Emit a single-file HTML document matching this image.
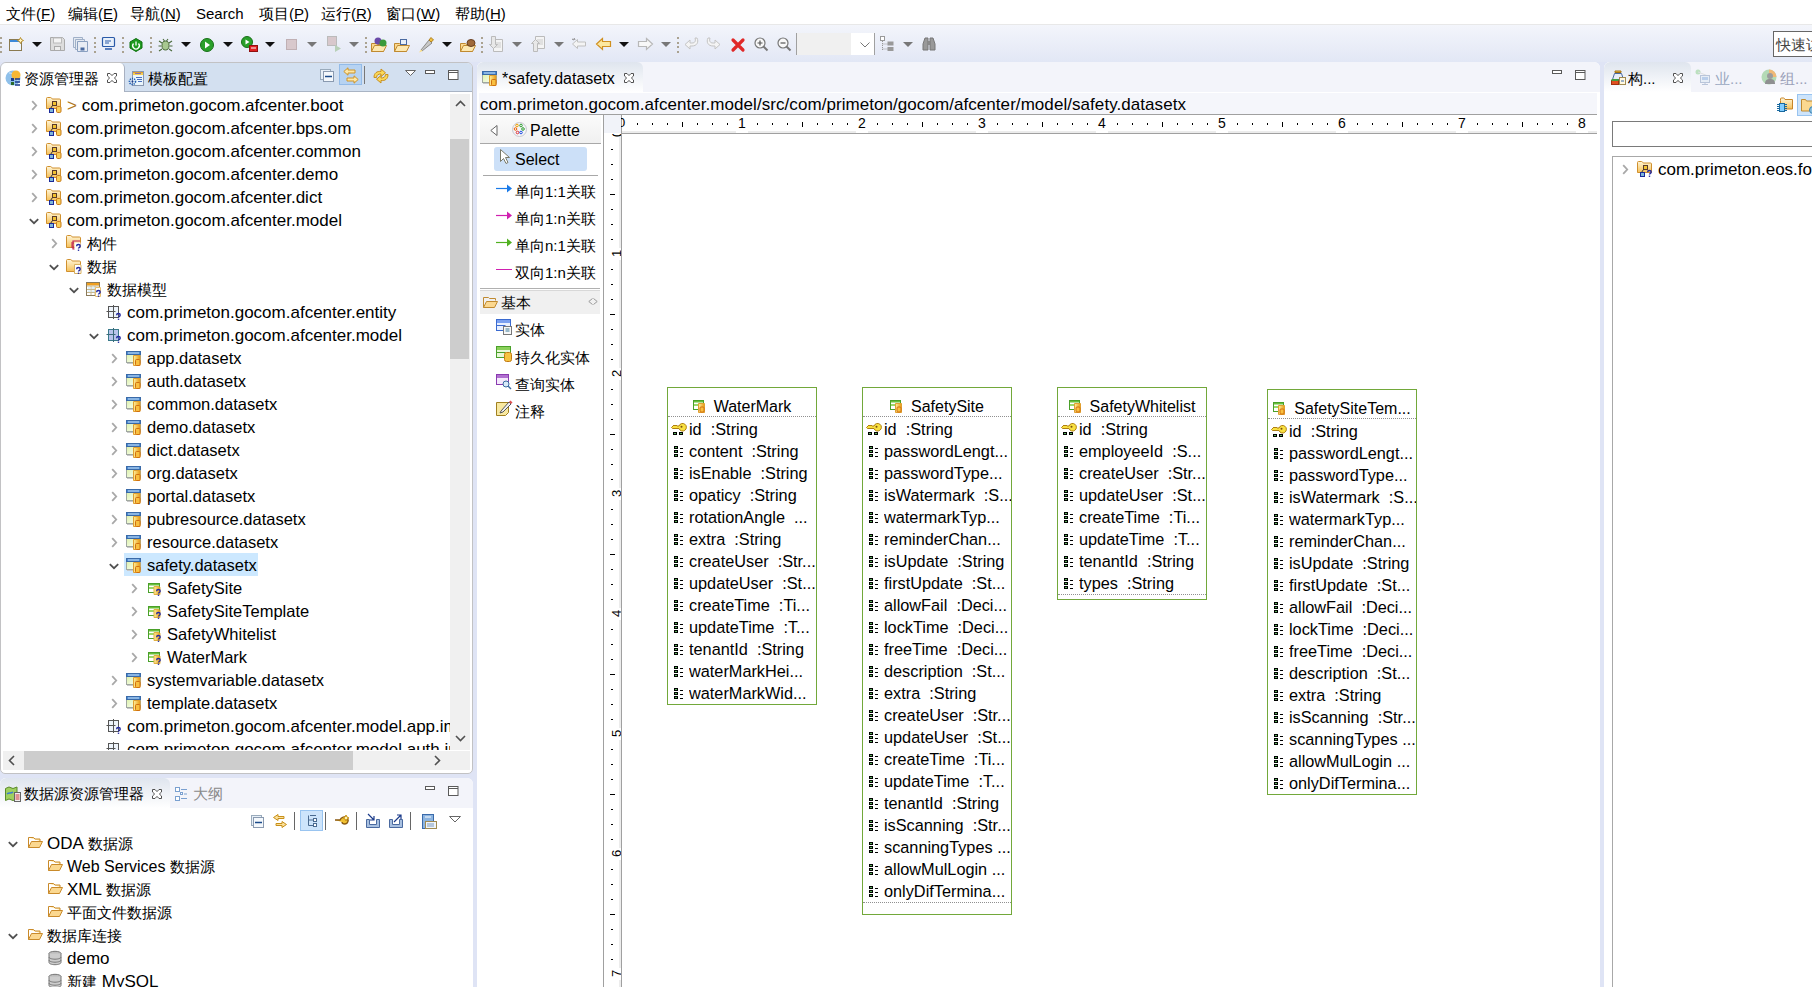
<!DOCTYPE html><html><head><meta charset="utf-8"><style>
*{box-sizing:border-box}
html,body{margin:0;padding:0}
body{width:1812px;height:987px;overflow:hidden;position:relative;background:#dfe4f5;font-family:"Liberation Sans",sans-serif;color:#000}
.a{position:absolute}
.t{position:absolute;white-space:nowrap}
svg.i{position:absolute;overflow:visible}
#menubar{left:0;top:0;width:1812px;height:24px;background:#fff}
#menubar span{position:absolute;top:4px;font-size:15px;line-height:20px}
#toolbar{left:0;top:24px;width:1812px;height:38px;background:linear-gradient(#f3f5fb,#e2e7f5);border-top:1px solid #e8e8e8}
.panel{position:absolute;background:#fff;overflow:hidden}
.hdr{position:absolute;left:0;top:0;right:0;height:30px}
.row{position:absolute;height:23px;line-height:23px;white-space:nowrap;font-size:17px}
.cj{font-size:15px}
</style></head><body>
<svg width="0" height="0" style="position:absolute"><defs><linearGradient id="gF" x1="0" y1="0" x2="0" y2="1"><stop offset="0" stop-color="#fff6d8"/><stop offset="1" stop-color="#f6c15a"/></linearGradient><linearGradient id="gW" x1="0" y1="0" x2="1" y2="1"><stop offset="0" stop-color="#d8f0a0"/><stop offset="1" stop-color="#ffffff"/></linearGradient><linearGradient id="gY" x1="0" y1="0" x2="1" y2="0"><stop offset="0" stop-color="#fff0a0"/><stop offset="1" stop-color="#e89a10"/></linearGradient><linearGradient id="gT" x1="0" y1="0" x2="0" y2="1"><stop offset="0" stop-color="#dfe6ef"/><stop offset="1" stop-color="#ffffff"/></linearGradient></defs></svg>
<div id="menubar" class="a">
<span style="left:6px">文件(<u>F</u>)</span>
<span style="left:68px">编辑(<u>E</u>)</span>
<span style="left:130px">导航(<u>N</u>)</span>
<span style="left:196px">Search</span>
<span style="left:259px">项目(<u>P</u>)</span>
<span style="left:321px">运行(<u>R</u>)</span>
<span style="left:386px">窗口(<u>W</u>)</span>
<span style="left:455px">帮助(<u>H</u>)</span>
</div>
<div id="toolbar" class="a"></div>
<div class="panel" style="left:0;top:62px;width:473px;height:712px;border:1px solid #c2c2c4;border-radius:6px 6px 5px 5px">
<div class="hdr" style="height:29px;background:#d3e0f0;border-bottom:1px solid #a9b4c4"></div>
<div class="a" style="left:0;top:0;width:124px;height:29px;background:#fff;border-right:1px solid #a8b0c0;border-radius:5px 5px 0 0"></div>
</div>
<div class="a" style="left:0;top:93px;width:450px;height:657px;overflow:hidden">
<svg class="i" style="left:31px;top:7px" width="7" height="11" viewBox="0 0 7 11"><path d="M1.2 1.2l4 4.3l-4 4.3" fill="none" stroke="#a8a8a8" stroke-width="1.8"/></svg>
<svg class="i" style="left:46px;top:4px" width="16" height="16" viewBox="0 0 16 16"><path d="M0.5 11.5V1.5q0-1 1-1h3q.8 0 1.2.8l.5.7h7.3q1 0 1 1v8.5z" fill="url(#gF)" stroke="#d0902e"/><rect x="6.5" y="4.5" width="4" height="4" fill="#f2c230" stroke="#5a3a2a"/><path d="M6.5 8.5l-2 3" stroke="#333"/><rect x="3.5" y="11.5" width="4" height="4" fill="#7fb7d8" stroke="#1a2a9a"/><rect x="10.5" y="9.5" width="4.5" height="6" rx="1.2" fill="#f9cf5a" stroke="#c77a1a"/></svg>
<div class="row" style="left:67px;top:1px"><span style="color:#b07820">&gt;</span> com.primeton.gocom.afcenter.boot</div>
<svg class="i" style="left:31px;top:30px" width="7" height="11" viewBox="0 0 7 11"><path d="M1.2 1.2l4 4.3l-4 4.3" fill="none" stroke="#a8a8a8" stroke-width="1.8"/></svg>
<svg class="i" style="left:46px;top:27px" width="16" height="16" viewBox="0 0 16 16"><path d="M0.5 11.5V1.5q0-1 1-1h3q.8 0 1.2.8l.5.7h7.3q1 0 1 1v8.5z" fill="url(#gF)" stroke="#d0902e"/><rect x="6.5" y="4.5" width="4" height="4" fill="#f2c230" stroke="#5a3a2a"/><path d="M6.5 8.5l-2 3" stroke="#333"/><rect x="3.5" y="11.5" width="4" height="4" fill="#7fb7d8" stroke="#1a2a9a"/><rect x="10.5" y="9.5" width="4.5" height="6" rx="1.2" fill="#f9cf5a" stroke="#c77a1a"/></svg>
<div class="row" style="left:67px;top:24px">com.primeton.gocom.afcenter.bps.om</div>
<svg class="i" style="left:31px;top:53px" width="7" height="11" viewBox="0 0 7 11"><path d="M1.2 1.2l4 4.3l-4 4.3" fill="none" stroke="#a8a8a8" stroke-width="1.8"/></svg>
<svg class="i" style="left:46px;top:50px" width="16" height="16" viewBox="0 0 16 16"><path d="M0.5 11.5V1.5q0-1 1-1h3q.8 0 1.2.8l.5.7h7.3q1 0 1 1v8.5z" fill="url(#gF)" stroke="#d0902e"/><rect x="6.5" y="4.5" width="4" height="4" fill="#f2c230" stroke="#5a3a2a"/><path d="M6.5 8.5l-2 3" stroke="#333"/><rect x="3.5" y="11.5" width="4" height="4" fill="#7fb7d8" stroke="#1a2a9a"/><rect x="10.5" y="9.5" width="4.5" height="6" rx="1.2" fill="#f9cf5a" stroke="#c77a1a"/></svg>
<div class="row" style="left:67px;top:47px">com.primeton.gocom.afcenter.common</div>
<svg class="i" style="left:31px;top:76px" width="7" height="11" viewBox="0 0 7 11"><path d="M1.2 1.2l4 4.3l-4 4.3" fill="none" stroke="#a8a8a8" stroke-width="1.8"/></svg>
<svg class="i" style="left:46px;top:73px" width="16" height="16" viewBox="0 0 16 16"><path d="M0.5 11.5V1.5q0-1 1-1h3q.8 0 1.2.8l.5.7h7.3q1 0 1 1v8.5z" fill="url(#gF)" stroke="#d0902e"/><rect x="6.5" y="4.5" width="4" height="4" fill="#f2c230" stroke="#5a3a2a"/><path d="M6.5 8.5l-2 3" stroke="#333"/><rect x="3.5" y="11.5" width="4" height="4" fill="#7fb7d8" stroke="#1a2a9a"/><rect x="10.5" y="9.5" width="4.5" height="6" rx="1.2" fill="#f9cf5a" stroke="#c77a1a"/></svg>
<div class="row" style="left:67px;top:70px">com.primeton.gocom.afcenter.demo</div>
<svg class="i" style="left:31px;top:99px" width="7" height="11" viewBox="0 0 7 11"><path d="M1.2 1.2l4 4.3l-4 4.3" fill="none" stroke="#a8a8a8" stroke-width="1.8"/></svg>
<svg class="i" style="left:46px;top:96px" width="16" height="16" viewBox="0 0 16 16"><path d="M0.5 11.5V1.5q0-1 1-1h3q.8 0 1.2.8l.5.7h7.3q1 0 1 1v8.5z" fill="url(#gF)" stroke="#d0902e"/><rect x="6.5" y="4.5" width="4" height="4" fill="#f2c230" stroke="#5a3a2a"/><path d="M6.5 8.5l-2 3" stroke="#333"/><rect x="3.5" y="11.5" width="4" height="4" fill="#7fb7d8" stroke="#1a2a9a"/><rect x="10.5" y="9.5" width="4.5" height="6" rx="1.2" fill="#f9cf5a" stroke="#c77a1a"/></svg>
<div class="row" style="left:67px;top:93px">com.primeton.gocom.afcenter.dict</div>
<svg class="i" style="left:29px;top:125px" width="10" height="7" viewBox="0 0 10 7"><path d="M0.8 1.2l4.2 4l4.2-4" fill="none" stroke="#505050" stroke-width="1.8"/></svg>
<svg class="i" style="left:46px;top:119px" width="16" height="16" viewBox="0 0 16 16"><path d="M0.5 11.5V1.5q0-1 1-1h3q.8 0 1.2.8l.5.7h7.3q1 0 1 1v8.5z" fill="url(#gF)" stroke="#d0902e"/><rect x="6.5" y="4.5" width="4" height="4" fill="#f2c230" stroke="#5a3a2a"/><path d="M6.5 8.5l-2 3" stroke="#333"/><rect x="3.5" y="11.5" width="4" height="4" fill="#7fb7d8" stroke="#1a2a9a"/><rect x="10.5" y="9.5" width="4.5" height="6" rx="1.2" fill="#f9cf5a" stroke="#c77a1a"/></svg>
<div class="row" style="left:67px;top:116px">com.primeton.gocom.afcenter.model</div>
<svg class="i" style="left:51px;top:145px" width="7" height="11" viewBox="0 0 7 11"><path d="M1.2 1.2l4 4.3l-4 4.3" fill="none" stroke="#a8a8a8" stroke-width="1.8"/></svg>
<svg class="i" style="left:66px;top:142px" width="16" height="16" viewBox="0 0 16 16"><path d="M0.5 12.5V1.5q0-1 1-1h3q.8 0 1.2.8l.5.7h7.3q1 0 1 1v9.5z" fill="url(#gF)" stroke="#d0902e"/><path d="M14 6h-7v8h7M5 8h3M5 12h3M7 10h-2" fill="none" stroke="#c02050" stroke-width="1.2"/><path d="M8.5 7.5h6v8h-6z" fill="#fff"/><path d="M10.6 11.2q0-1.7 1.8-1.7t1.8 1.5q0 1-1 1.5q-.7.4-.7 1" fill="none" stroke="#2328a0" stroke-width="1.4"/><rect x="11.8" y="14.6" width="1.4" height="1.3" fill="#2328a0"/></svg>
<div class="row" style="left:87px;top:139px"><span class="cj">构件</span></div>
<svg class="i" style="left:49px;top:171px" width="10" height="7" viewBox="0 0 10 7"><path d="M0.8 1.2l4.2 4l4.2-4" fill="none" stroke="#505050" stroke-width="1.8"/></svg>
<svg class="i" style="left:66px;top:165px" width="16" height="16" viewBox="0 0 16 16"><path d="M0.5 13.5V2.5q0-1 1-1h3q.8 0 1.2.8l.5.7h7.3q1 0 1 1v9.5z" fill="url(#gF)" stroke="#d0902e"/><path d="M8.5 6.5h5.5l1 1v8h-6.5z" fill="#fff" stroke="#d8b060"/><path d="M10.6 11.2q0-1.7 1.8-1.7t1.8 1.5q0 1-1 1.5q-.7.4-.7 1" fill="none" stroke="#2328a0" stroke-width="1.4"/><rect x="11.8" y="14.6" width="1.4" height="1.3" fill="#2328a0"/></svg>
<div class="row" style="left:87px;top:162px"><span class="cj">数据</span></div>
<svg class="i" style="left:69px;top:194px" width="10" height="7" viewBox="0 0 10 7"><path d="M0.8 1.2l4.2 4l4.2-4" fill="none" stroke="#505050" stroke-width="1.8"/></svg>
<svg class="i" style="left:86px;top:188px" width="16" height="16" viewBox="0 0 16 16"><rect x="0.5" y="1.5" width="13" height="13" fill="#fff" stroke="#8a7a5a"/><rect x="1" y="2" width="12" height="2.5" fill="#f0a020"/><path d="M1 5h12M1 8.5h12M1 11.5h12M5 5v9M9 5v9" stroke="#c8b890"/><rect x="2" y="6" width="2.5" height="2" fill="#d8f0ff"/><rect x="6" y="6" width="2.5" height="2" fill="#d8f0ff"/><rect x="2" y="9.5" width="2.5" height="1.5" fill="#d8f0ff"/><rect x="6" y="9.5" width="2.5" height="1.5" fill="#d8f0ff"/><path d="M9.5 6.5h5v9h-5z" fill="#fff" stroke="#e8c070"/><path d="M10.6 11.2q0-1.7 1.8-1.7t1.8 1.5q0 1-1 1.5q-.7.4-.7 1" fill="none" stroke="#2328a0" stroke-width="1.4"/><rect x="11.8" y="14.6" width="1.4" height="1.3" fill="#2328a0"/></svg>
<div class="row" style="left:107px;top:185px"><span class="cj">数据模型</span></div>
<svg class="i" style="left:106px;top:211px" width="16" height="16" viewBox="0 0 16 16"><rect x="2.5" y="2.5" width="10" height="11" fill="#eef4fb" stroke="#555"/><path d="M7.5 1v14M0.5 7.5h9" stroke="#555"/><path d="M10.6 11.2q0-1.7 1.8-1.7t1.8 1.5q0 1-1 1.5q-.7.4-.7 1" fill="none" stroke="#2328a0" stroke-width="1.4"/><rect x="11.8" y="14.6" width="1.4" height="1.3" fill="#2328a0"/></svg>
<div class="row" style="left:127px;top:208px">com.primeton.gocom.afcenter.entity</div>
<svg class="i" style="left:89px;top:240px" width="10" height="7" viewBox="0 0 10 7"><path d="M0.8 1.2l4.2 4l4.2-4" fill="none" stroke="#505050" stroke-width="1.8"/></svg>
<svg class="i" style="left:106px;top:234px" width="16" height="16" viewBox="0 0 16 16"><rect x="2.5" y="2.5" width="10" height="11" fill="#b8c4ec" stroke="#3a7a8a"/><path d="M7.5 1v14M0.5 7.5h9" stroke="#3a6a7a"/><path d="M10.6 11.2q0-1.7 1.8-1.7t1.8 1.5q0 1-1 1.5q-.7.4-.7 1" fill="none" stroke="#2328a0" stroke-width="1.4"/><rect x="11.8" y="14.6" width="1.4" height="1.3" fill="#2328a0"/></svg>
<div class="row" style="left:127px;top:231px">com.primeton.gocom.afcenter.model</div>
<svg class="i" style="left:111px;top:260px" width="7" height="11" viewBox="0 0 7 11"><path d="M1.2 1.2l4 4.3l-4 4.3" fill="none" stroke="#a8a8a8" stroke-width="1.8"/></svg>
<svg class="i" style="left:126px;top:257px" width="16" height="16" viewBox="0 0 16 16"><rect x="1" y="2" width="14" height="12" fill="#c8c8c8"/><rect x="0.5" y="1.5" width="14" height="11" fill="url(#gW)" stroke="#a0a8a0"/><rect x="0.5" y="1.5" width="14" height="3" fill="#4a8ad0" stroke="#3a6aa8"/><path d="M2 3h11" stroke="#c8e0f8"/><path d="M7.5 5.5h6.5v10h-6.5z" fill="url(#gY)" stroke="#e0a030"/><rect x="9.5" y="9.5" width="4.5" height="6" rx="1" fill="#f8c040" stroke="#d07010"/></svg>
<div class="row" style="left:147px;top:254px;font-size:16.5px">app.datasetx</div>
<svg class="i" style="left:111px;top:283px" width="7" height="11" viewBox="0 0 7 11"><path d="M1.2 1.2l4 4.3l-4 4.3" fill="none" stroke="#a8a8a8" stroke-width="1.8"/></svg>
<svg class="i" style="left:126px;top:280px" width="16" height="16" viewBox="0 0 16 16"><rect x="1" y="2" width="14" height="12" fill="#c8c8c8"/><rect x="0.5" y="1.5" width="14" height="11" fill="url(#gW)" stroke="#a0a8a0"/><rect x="0.5" y="1.5" width="14" height="3" fill="#4a8ad0" stroke="#3a6aa8"/><path d="M2 3h11" stroke="#c8e0f8"/><path d="M7.5 5.5h6.5v10h-6.5z" fill="url(#gY)" stroke="#e0a030"/><rect x="9.5" y="9.5" width="4.5" height="6" rx="1" fill="#f8c040" stroke="#d07010"/></svg>
<div class="row" style="left:147px;top:277px;font-size:16.5px">auth.datasetx</div>
<svg class="i" style="left:111px;top:306px" width="7" height="11" viewBox="0 0 7 11"><path d="M1.2 1.2l4 4.3l-4 4.3" fill="none" stroke="#a8a8a8" stroke-width="1.8"/></svg>
<svg class="i" style="left:126px;top:303px" width="16" height="16" viewBox="0 0 16 16"><rect x="1" y="2" width="14" height="12" fill="#c8c8c8"/><rect x="0.5" y="1.5" width="14" height="11" fill="url(#gW)" stroke="#a0a8a0"/><rect x="0.5" y="1.5" width="14" height="3" fill="#4a8ad0" stroke="#3a6aa8"/><path d="M2 3h11" stroke="#c8e0f8"/><path d="M7.5 5.5h6.5v10h-6.5z" fill="url(#gY)" stroke="#e0a030"/><rect x="9.5" y="9.5" width="4.5" height="6" rx="1" fill="#f8c040" stroke="#d07010"/></svg>
<div class="row" style="left:147px;top:300px;font-size:16.5px">common.datasetx</div>
<svg class="i" style="left:111px;top:329px" width="7" height="11" viewBox="0 0 7 11"><path d="M1.2 1.2l4 4.3l-4 4.3" fill="none" stroke="#a8a8a8" stroke-width="1.8"/></svg>
<svg class="i" style="left:126px;top:326px" width="16" height="16" viewBox="0 0 16 16"><rect x="1" y="2" width="14" height="12" fill="#c8c8c8"/><rect x="0.5" y="1.5" width="14" height="11" fill="url(#gW)" stroke="#a0a8a0"/><rect x="0.5" y="1.5" width="14" height="3" fill="#4a8ad0" stroke="#3a6aa8"/><path d="M2 3h11" stroke="#c8e0f8"/><path d="M7.5 5.5h6.5v10h-6.5z" fill="url(#gY)" stroke="#e0a030"/><rect x="9.5" y="9.5" width="4.5" height="6" rx="1" fill="#f8c040" stroke="#d07010"/></svg>
<div class="row" style="left:147px;top:323px;font-size:16.5px">demo.datasetx</div>
<svg class="i" style="left:111px;top:352px" width="7" height="11" viewBox="0 0 7 11"><path d="M1.2 1.2l4 4.3l-4 4.3" fill="none" stroke="#a8a8a8" stroke-width="1.8"/></svg>
<svg class="i" style="left:126px;top:349px" width="16" height="16" viewBox="0 0 16 16"><rect x="1" y="2" width="14" height="12" fill="#c8c8c8"/><rect x="0.5" y="1.5" width="14" height="11" fill="url(#gW)" stroke="#a0a8a0"/><rect x="0.5" y="1.5" width="14" height="3" fill="#4a8ad0" stroke="#3a6aa8"/><path d="M2 3h11" stroke="#c8e0f8"/><path d="M7.5 5.5h6.5v10h-6.5z" fill="url(#gY)" stroke="#e0a030"/><rect x="9.5" y="9.5" width="4.5" height="6" rx="1" fill="#f8c040" stroke="#d07010"/></svg>
<div class="row" style="left:147px;top:346px;font-size:16.5px">dict.datasetx</div>
<svg class="i" style="left:111px;top:375px" width="7" height="11" viewBox="0 0 7 11"><path d="M1.2 1.2l4 4.3l-4 4.3" fill="none" stroke="#a8a8a8" stroke-width="1.8"/></svg>
<svg class="i" style="left:126px;top:372px" width="16" height="16" viewBox="0 0 16 16"><rect x="1" y="2" width="14" height="12" fill="#c8c8c8"/><rect x="0.5" y="1.5" width="14" height="11" fill="url(#gW)" stroke="#a0a8a0"/><rect x="0.5" y="1.5" width="14" height="3" fill="#4a8ad0" stroke="#3a6aa8"/><path d="M2 3h11" stroke="#c8e0f8"/><path d="M7.5 5.5h6.5v10h-6.5z" fill="url(#gY)" stroke="#e0a030"/><rect x="9.5" y="9.5" width="4.5" height="6" rx="1" fill="#f8c040" stroke="#d07010"/></svg>
<div class="row" style="left:147px;top:369px;font-size:16.5px">org.datasetx</div>
<svg class="i" style="left:111px;top:398px" width="7" height="11" viewBox="0 0 7 11"><path d="M1.2 1.2l4 4.3l-4 4.3" fill="none" stroke="#a8a8a8" stroke-width="1.8"/></svg>
<svg class="i" style="left:126px;top:395px" width="16" height="16" viewBox="0 0 16 16"><rect x="1" y="2" width="14" height="12" fill="#c8c8c8"/><rect x="0.5" y="1.5" width="14" height="11" fill="url(#gW)" stroke="#a0a8a0"/><rect x="0.5" y="1.5" width="14" height="3" fill="#4a8ad0" stroke="#3a6aa8"/><path d="M2 3h11" stroke="#c8e0f8"/><path d="M7.5 5.5h6.5v10h-6.5z" fill="url(#gY)" stroke="#e0a030"/><rect x="9.5" y="9.5" width="4.5" height="6" rx="1" fill="#f8c040" stroke="#d07010"/></svg>
<div class="row" style="left:147px;top:392px;font-size:16.5px">portal.datasetx</div>
<svg class="i" style="left:111px;top:421px" width="7" height="11" viewBox="0 0 7 11"><path d="M1.2 1.2l4 4.3l-4 4.3" fill="none" stroke="#a8a8a8" stroke-width="1.8"/></svg>
<svg class="i" style="left:126px;top:418px" width="16" height="16" viewBox="0 0 16 16"><rect x="1" y="2" width="14" height="12" fill="#c8c8c8"/><rect x="0.5" y="1.5" width="14" height="11" fill="url(#gW)" stroke="#a0a8a0"/><rect x="0.5" y="1.5" width="14" height="3" fill="#4a8ad0" stroke="#3a6aa8"/><path d="M2 3h11" stroke="#c8e0f8"/><path d="M7.5 5.5h6.5v10h-6.5z" fill="url(#gY)" stroke="#e0a030"/><rect x="9.5" y="9.5" width="4.5" height="6" rx="1" fill="#f8c040" stroke="#d07010"/></svg>
<div class="row" style="left:147px;top:415px;font-size:16.5px">pubresource.datasetx</div>
<svg class="i" style="left:111px;top:444px" width="7" height="11" viewBox="0 0 7 11"><path d="M1.2 1.2l4 4.3l-4 4.3" fill="none" stroke="#a8a8a8" stroke-width="1.8"/></svg>
<svg class="i" style="left:126px;top:441px" width="16" height="16" viewBox="0 0 16 16"><rect x="1" y="2" width="14" height="12" fill="#c8c8c8"/><rect x="0.5" y="1.5" width="14" height="11" fill="url(#gW)" stroke="#a0a8a0"/><rect x="0.5" y="1.5" width="14" height="3" fill="#4a8ad0" stroke="#3a6aa8"/><path d="M2 3h11" stroke="#c8e0f8"/><path d="M7.5 5.5h6.5v10h-6.5z" fill="url(#gY)" stroke="#e0a030"/><rect x="9.5" y="9.5" width="4.5" height="6" rx="1" fill="#f8c040" stroke="#d07010"/></svg>
<div class="row" style="left:147px;top:438px;font-size:16.5px">resource.datasetx</div>
<div class="a" style="left:124px;top:460px;width:134px;height:23px;background:#cce8ff"></div>
<svg class="i" style="left:109px;top:470px" width="10" height="7" viewBox="0 0 10 7"><path d="M0.8 1.2l4.2 4l4.2-4" fill="none" stroke="#505050" stroke-width="1.8"/></svg>
<svg class="i" style="left:126px;top:464px" width="16" height="16" viewBox="0 0 16 16"><rect x="1" y="2" width="14" height="12" fill="#c8c8c8"/><rect x="0.5" y="1.5" width="14" height="11" fill="url(#gW)" stroke="#a0a8a0"/><rect x="0.5" y="1.5" width="14" height="3" fill="#4a8ad0" stroke="#3a6aa8"/><path d="M2 3h11" stroke="#c8e0f8"/><path d="M7.5 5.5h6.5v10h-6.5z" fill="url(#gY)" stroke="#e0a030"/><rect x="9.5" y="9.5" width="4.5" height="6" rx="1" fill="#f8c040" stroke="#d07010"/></svg>
<div class="row" style="left:147px;top:461px;font-size:16.5px">safety.datasetx</div>
<svg class="i" style="left:131px;top:490px" width="7" height="11" viewBox="0 0 7 11"><path d="M1.2 1.2l4 4.3l-4 4.3" fill="none" stroke="#a8a8a8" stroke-width="1.8"/></svg>
<svg class="i" style="left:146px;top:487px" width="16" height="16" viewBox="0 0 16 16"><rect x="2.5" y="3.5" width="11" height="9" fill="#fff" stroke="#4aa02a"/><rect x="3" y="4" width="10" height="1.5" fill="#6ac03a"/><rect x="3" y="7" width="7" height="2" fill="#9ad868"/><path d="M8 6.5h5l1 1v7h-6z" fill="url(#gY)" stroke="#e0b040"/><path d="M10.6 11.2q0-1.7 1.8-1.7t1.8 1.5q0 1-1 1.5q-.7.4-.7 1" fill="none" stroke="#2328a0" stroke-width="1.3"/><rect x="11.8" y="14.6" width="1.4" height="1.3" fill="#2328a0"/></svg>
<div class="row" style="left:167px;top:484px;font-size:16.5px">SafetySite</div>
<svg class="i" style="left:131px;top:513px" width="7" height="11" viewBox="0 0 7 11"><path d="M1.2 1.2l4 4.3l-4 4.3" fill="none" stroke="#a8a8a8" stroke-width="1.8"/></svg>
<svg class="i" style="left:146px;top:510px" width="16" height="16" viewBox="0 0 16 16"><rect x="2.5" y="3.5" width="11" height="9" fill="#fff" stroke="#4aa02a"/><rect x="3" y="4" width="10" height="1.5" fill="#6ac03a"/><rect x="3" y="7" width="7" height="2" fill="#9ad868"/><path d="M8 6.5h5l1 1v7h-6z" fill="url(#gY)" stroke="#e0b040"/><path d="M10.6 11.2q0-1.7 1.8-1.7t1.8 1.5q0 1-1 1.5q-.7.4-.7 1" fill="none" stroke="#2328a0" stroke-width="1.3"/><rect x="11.8" y="14.6" width="1.4" height="1.3" fill="#2328a0"/></svg>
<div class="row" style="left:167px;top:507px;font-size:16.5px">SafetySiteTemplate</div>
<svg class="i" style="left:131px;top:536px" width="7" height="11" viewBox="0 0 7 11"><path d="M1.2 1.2l4 4.3l-4 4.3" fill="none" stroke="#a8a8a8" stroke-width="1.8"/></svg>
<svg class="i" style="left:146px;top:533px" width="16" height="16" viewBox="0 0 16 16"><rect x="2.5" y="3.5" width="11" height="9" fill="#fff" stroke="#4aa02a"/><rect x="3" y="4" width="10" height="1.5" fill="#6ac03a"/><rect x="3" y="7" width="7" height="2" fill="#9ad868"/><path d="M8 6.5h5l1 1v7h-6z" fill="url(#gY)" stroke="#e0b040"/><path d="M10.6 11.2q0-1.7 1.8-1.7t1.8 1.5q0 1-1 1.5q-.7.4-.7 1" fill="none" stroke="#2328a0" stroke-width="1.3"/><rect x="11.8" y="14.6" width="1.4" height="1.3" fill="#2328a0"/></svg>
<div class="row" style="left:167px;top:530px;font-size:16.5px">SafetyWhitelist</div>
<svg class="i" style="left:131px;top:559px" width="7" height="11" viewBox="0 0 7 11"><path d="M1.2 1.2l4 4.3l-4 4.3" fill="none" stroke="#a8a8a8" stroke-width="1.8"/></svg>
<svg class="i" style="left:146px;top:556px" width="16" height="16" viewBox="0 0 16 16"><rect x="2.5" y="3.5" width="11" height="9" fill="#fff" stroke="#4aa02a"/><rect x="3" y="4" width="10" height="1.5" fill="#6ac03a"/><rect x="3" y="7" width="7" height="2" fill="#9ad868"/><path d="M8 6.5h5l1 1v7h-6z" fill="url(#gY)" stroke="#e0b040"/><path d="M10.6 11.2q0-1.7 1.8-1.7t1.8 1.5q0 1-1 1.5q-.7.4-.7 1" fill="none" stroke="#2328a0" stroke-width="1.3"/><rect x="11.8" y="14.6" width="1.4" height="1.3" fill="#2328a0"/></svg>
<div class="row" style="left:167px;top:553px;font-size:16.5px">WaterMark</div>
<svg class="i" style="left:111px;top:582px" width="7" height="11" viewBox="0 0 7 11"><path d="M1.2 1.2l4 4.3l-4 4.3" fill="none" stroke="#a8a8a8" stroke-width="1.8"/></svg>
<svg class="i" style="left:126px;top:579px" width="16" height="16" viewBox="0 0 16 16"><rect x="1" y="2" width="14" height="12" fill="#c8c8c8"/><rect x="0.5" y="1.5" width="14" height="11" fill="url(#gW)" stroke="#a0a8a0"/><rect x="0.5" y="1.5" width="14" height="3" fill="#4a8ad0" stroke="#3a6aa8"/><path d="M2 3h11" stroke="#c8e0f8"/><path d="M7.5 5.5h6.5v10h-6.5z" fill="url(#gY)" stroke="#e0a030"/><rect x="9.5" y="9.5" width="4.5" height="6" rx="1" fill="#f8c040" stroke="#d07010"/></svg>
<div class="row" style="left:147px;top:576px;font-size:16.5px">systemvariable.datasetx</div>
<svg class="i" style="left:111px;top:605px" width="7" height="11" viewBox="0 0 7 11"><path d="M1.2 1.2l4 4.3l-4 4.3" fill="none" stroke="#a8a8a8" stroke-width="1.8"/></svg>
<svg class="i" style="left:126px;top:602px" width="16" height="16" viewBox="0 0 16 16"><rect x="1" y="2" width="14" height="12" fill="#c8c8c8"/><rect x="0.5" y="1.5" width="14" height="11" fill="url(#gW)" stroke="#a0a8a0"/><rect x="0.5" y="1.5" width="14" height="3" fill="#4a8ad0" stroke="#3a6aa8"/><path d="M2 3h11" stroke="#c8e0f8"/><path d="M7.5 5.5h6.5v10h-6.5z" fill="url(#gY)" stroke="#e0a030"/><rect x="9.5" y="9.5" width="4.5" height="6" rx="1" fill="#f8c040" stroke="#d07010"/></svg>
<div class="row" style="left:147px;top:599px;font-size:16.5px">template.datasetx</div>
<svg class="i" style="left:106px;top:625px" width="16" height="16" viewBox="0 0 16 16"><rect x="2.5" y="2.5" width="10" height="11" fill="#eef4fb" stroke="#555"/><path d="M7.5 1v14M0.5 7.5h9" stroke="#555"/><path d="M10.6 11.2q0-1.7 1.8-1.7t1.8 1.5q0 1-1 1.5q-.7.4-.7 1" fill="none" stroke="#2328a0" stroke-width="1.4"/><rect x="11.8" y="14.6" width="1.4" height="1.3" fill="#2328a0"/></svg>
<div class="row" style="left:127px;top:622px">com.primeton.gocom.afcenter.model.app.impl</div>
<svg class="i" style="left:106px;top:648px" width="16" height="16" viewBox="0 0 16 16"><rect x="2.5" y="2.5" width="10" height="11" fill="#eef4fb" stroke="#555"/><path d="M7.5 1v14M0.5 7.5h9" stroke="#555"/><path d="M10.6 11.2q0-1.7 1.8-1.7t1.8 1.5q0 1-1 1.5q-.7.4-.7 1" fill="none" stroke="#2328a0" stroke-width="1.4"/><rect x="11.8" y="14.6" width="1.4" height="1.3" fill="#2328a0"/></svg>
<div class="row" style="left:127px;top:645px">com.primeton.gocom.afcenter.model.auth.impl</div>
</div>
<div class="a" style="left:450px;top:94px;width:20px;height:656px;background:#f0f0f0"></div>
<div class="a" style="left:450px;top:139px;width:19px;height:220px;background:#cdcdcd"></div>
<svg class="i" style="left:455px;top:100px" width="11" height="7" viewBox="0 0 11 7"><path d="M1 6l4.5-4.5L10 6" fill="none" stroke="#505050" stroke-width="1.6"/></svg>
<svg class="i" style="left:455px;top:735px" width="11" height="7" viewBox="0 0 11 7"><path d="M1 1l4.5 4.5L10 1" fill="none" stroke="#505050" stroke-width="1.6"/></svg>
<div class="a" style="left:3px;top:751px;width:467px;height:19px;background:#f0f0f0"></div>
<div class="a" style="left:24px;top:751px;width:329px;height:19px;background:#cdcdcd"></div>
<svg class="i" style="left:8px;top:755px" width="7" height="11" viewBox="0 0 7 11"><path d="M6 1L1.5 5.5L6 10" fill="none" stroke="#505050" stroke-width="1.6"/></svg>
<svg class="i" style="left:434px;top:755px" width="7" height="11" viewBox="0 0 7 11"><path d="M1 1l4.5 4.5L1 10" fill="none" stroke="#505050" stroke-width="1.6"/></svg>
<div class="panel" style="left:0;top:778px;width:473px;height:209px;border-radius:6px 6px 0 0">
<div class="hdr" style="background:#f3f4fa"></div>
<div class="a" style="left:0;top:0;width:170px;height:30px;background:linear-gradient(#dfe5ee,#fff);border-radius:6px 6px 0 0"></div>
</div>
<svg class="i" style="left:8px;top:841px" width="10" height="7" viewBox="0 0 10 7"><path d="M0.8 1.2l4.2 4l4.2-4" fill="none" stroke="#505050" stroke-width="1.8"/></svg>
<svg class="i" style="left:27px;top:834px" width="16" height="16" viewBox="0 0 16 16"><path d="M1.5 3.5h5l1.5 1.5h5v2" fill="#fde3a0" stroke="#c98a2a"/><path d="M1.5 13.5v-10M1.5 13.5h11l3-6h-11z" fill="#fbd890" stroke="#c98a2a"/></svg>
<div class="row" style="left:47px;top:832px">ODA <span class="cj">数据源</span></div>
<svg class="i" style="left:47px;top:857px" width="16" height="16" viewBox="0 0 16 16"><path d="M1.5 3.5h5l1.5 1.5h5v2" fill="#fde3a0" stroke="#c98a2a"/><path d="M1.5 13.5v-10M1.5 13.5h11l3-6h-11z" fill="#fbd890" stroke="#c98a2a"/></svg>
<div class="row" style="left:67px;top:855px"><span style="font-size:16px">Web Services </span><span class="cj">数据源</span></div>
<svg class="i" style="left:47px;top:880px" width="16" height="16" viewBox="0 0 16 16"><path d="M1.5 3.5h5l1.5 1.5h5v2" fill="#fde3a0" stroke="#c98a2a"/><path d="M1.5 13.5v-10M1.5 13.5h11l3-6h-11z" fill="#fbd890" stroke="#c98a2a"/></svg>
<div class="row" style="left:67px;top:878px">XML <span class="cj">数据源</span></div>
<svg class="i" style="left:47px;top:903px" width="16" height="16" viewBox="0 0 16 16"><path d="M1.5 3.5h5l1.5 1.5h5v2" fill="#fde3a0" stroke="#c98a2a"/><path d="M1.5 13.5v-10M1.5 13.5h11l3-6h-11z" fill="#fbd890" stroke="#c98a2a"/></svg>
<div class="row" style="left:67px;top:901px"><span class="cj">平面文件数据源</span></div>
<svg class="i" style="left:8px;top:933px" width="10" height="7" viewBox="0 0 10 7"><path d="M0.8 1.2l4.2 4l4.2-4" fill="none" stroke="#505050" stroke-width="1.8"/></svg>
<svg class="i" style="left:27px;top:926px" width="16" height="16" viewBox="0 0 16 16"><path d="M1.5 3.5h5l1.5 1.5h5v2" fill="#fde3a0" stroke="#c98a2a"/><path d="M1.5 13.5v-10M1.5 13.5h11l3-6h-11z" fill="#fbd890" stroke="#c98a2a"/></svg>
<div class="row" style="left:47px;top:924px"><span class="cj">数据库连接</span></div>
<svg class="i" style="left:47px;top:950px" width="16" height="16" viewBox="0 0 16 16"><ellipse cx="8" cy="3.5" rx="6" ry="2.2" fill="#bbb" stroke="#777"/><path d="M2 3.5v9c0 1.2 2.7 2.2 6 2.2s6-1 6-2.2v-9" fill="#ccc" stroke="#777"/><path d="M2 7c0 1.2 2.7 2.2 6 2.2s6-1 6-2.2M2 10c0 1.2 2.7 2.2 6 2.2s6-1 6-2.2" fill="none" stroke="#777"/></svg>
<div class="row" style="left:67px;top:947px">demo</div>
<svg class="i" style="left:47px;top:973px" width="16" height="16" viewBox="0 0 16 16"><ellipse cx="8" cy="3.5" rx="6" ry="2.2" fill="#bbb" stroke="#777"/><path d="M2 3.5v9c0 1.2 2.7 2.2 6 2.2s6-1 6-2.2v-9" fill="#ccc" stroke="#777"/><path d="M2 7c0 1.2 2.7 2.2 6 2.2s6-1 6-2.2M2 10c0 1.2 2.7 2.2 6 2.2s6-1 6-2.2" fill="none" stroke="#777"/></svg>
<div class="row" style="left:67px;top:970px"><span class="cj">新建</span> MySQL</div>
<div class="panel" style="left:477px;top:62px;width:1123px;height:925px;border-radius:6px 6px 0 0">
<div class="hdr" style="background:#f3f4fa"></div>
<div class="a" style="left:0;top:0;width:166px;height:30px;background:linear-gradient(#dfe5ee,#fff);border-radius:6px 6px 0 0"></div>
</div>
<div class="panel" style="left:1604px;top:62px;width:208px;height:925px;border-radius:6px 0 0 0">
<div class="hdr" style="background:#f3f4fa"></div>
<div class="a" style="left:0;top:0;width:87px;height:30px;background:linear-gradient(#dfe5ee,#fff);border-radius:6px 6px 0 0"></div>
</div>
<svg class="i" style="left:5px;top:70px" width="16" height="16" viewBox="0 0 16 16"><circle cx="8" cy="8" r="7.5" fill="#8fc0ea"/><path d="M4 3c4 0 8 3 9 8" stroke="#fff" fill="none" opacity=".6"/><circle cx="11" cy="5" r="4.5" fill="#f7b733"/><rect x="6" y="8" width="3" height="3" fill="#1a3a8a"/><rect x="6" y="12" width="3" height="3" fill="#2a6a2a"/><path d="M10 9h5M10 12h5M10 15h5" stroke="#1a3a8a" stroke-width="1.3"/></svg>
<div class="t cj" style="left:24px;top:67px;line-height:24px">资源管理器</div>
<svg class="i" style="left:107px;top:73px" width="10" height="10" viewBox="0 0 10 10"><path d="M0.5 0.5H3L5 2.6L7 0.5H9.5V3L7.4 5L9.5 7V9.5H7L5 7.4L3 9.5H0.5V7L2.6 5L0.5 3Z" fill="#fff" stroke="#505050"/></svg>
<svg class="i" style="left:128px;top:70px" width="16" height="16" viewBox="0 0 16 16"><rect x="4.5" y="1.5" width="11" height="14" fill="#eaf6fc" stroke="#8a98b0"/><rect x="5" y="2" width="10" height="3" fill="#f8d050"/><path d="M5 2.5h10" stroke="#e0a030"/><path d="M7 3.5h6" stroke="#8a70b0"/><path d="M8 7.5h6M9 9.5h5M10 11.5h4" stroke="#4a70c0"/><circle cx="4.5" cy="11.5" r="3" fill="none" stroke="#1a5ab0" stroke-width="1.6" stroke-dasharray="1.2 1"/><circle cx="4.5" cy="11.5" r="1" fill="#1a3a8a"/></svg>
<div class="t cj" style="left:148px;top:67px;line-height:24px">模板配置</div>
<svg class="i" style="left:320px;top:69px" width="14" height="13" viewBox="0 0 14 13"><rect x="0.5" y="0.5" width="10" height="10" fill="#e8f0f8" stroke="#9ab"/><rect x="3.5" y="2.5" width="10" height="10" fill="#f4f8fc" stroke="#8a9ab0"/><path d="M5 7.5h7" stroke="#1a4a8a" stroke-width="1.5"/></svg>
<div class="a" style="left:339px;top:64px;width:23px;height:21px;background:#b7d3f2;border:1px solid #93bbe8"></div>
<svg class="i" style="left:343px;top:67px" width="16" height="17" viewBox="0 0 16 17"><path d="M0.8 4.5L5 0.8V3H12V6H5V8.2Z" fill="#fde7a6" stroke="#cf9428" stroke-linejoin="round"/><path d="M15.2 12.5L11 8.8V11H4V14H11V16.2Z" fill="#fde7a6" stroke="#cf9428" stroke-linejoin="round"/></svg>
<div class="a" style="left:364px;top:66px;width:1px;height:18px;background:#777"></div>
<svg class="i" style="left:373px;top:68px" width="16" height="16" viewBox="0 0 16 16"><path d="M1 9.5C1 5 4 3 8 3.5V1l4.5 3.8L8 8.5V6C5.5 5.8 3.5 7 3.5 9.5Z" fill="#fbd858" stroke="#c89020" stroke-linejoin="round"/><path d="M15 6.5C15 11 12 13 8 12.5V15l-4.5-3.8L8 7.5V10C10.5 10.2 12.5 9 12.5 6.5Z" fill="#fbd858" stroke="#c89020" stroke-linejoin="round"/></svg>
<svg class="i" style="left:405px;top:70px" width="11" height="6" viewBox="0 0 11 6"><path d="M0.5 0.5h10l-5 5z" fill="#fff" stroke="#666"/></svg>
<svg class="i" style="left:425px;top:70px" width="10" height="4" viewBox="0 0 10 4"><rect x="0.5" y="0.5" width="9" height="3" fill="#fff" stroke="#5a5a5a"/></svg>
<svg class="i" style="left:448px;top:70px" width="11" height="10" viewBox="0 0 11 10"><rect x="0.5" y="0.5" width="9.5" height="9" fill="#fff" stroke="#5a5a5a"/><path d="M0.5 2.5h9.5" stroke="#5a5a5a"/></svg>
<svg class="i" style="left:5px;top:786px" width="16" height="16" viewBox="0 0 16 16"><path d="M0.5 2.5l3.5-1.5l4 1.5l4-1.5v12l-4 1.5l-4-1.5l-3.5 1.5z" fill="#9fd060" stroke="#5a8a2a"/><path d="M2 8c2-2 4 0 6-2" stroke="#3a7ad0" stroke-width="1.3" fill="none"/><rect x="9.5" y="6.5" width="6" height="9" fill="#f0f0f0" stroke="#666"/><path d="M10.5 9h4M10.5 11h4M10.5 13h4" stroke="#c33"/></svg>
<div class="t cj" style="left:24px;top:782px;line-height:24px">数据源资源管理器</div>
<svg class="i" style="left:152px;top:789px" width="10" height="10" viewBox="0 0 10 10"><path d="M0.5 0.5H3L5 2.6L7 0.5H9.5V3L7.4 5L9.5 7V9.5H7L5 7.4L3 9.5H0.5V7L2.6 5L0.5 3Z" fill="#fff" stroke="#505050"/></svg>
<svg class="i" style="left:175px;top:787px" width="14" height="14" viewBox="0 0 14 14"><rect x="0.5" y="0.5" width="4" height="4" fill="#fff" stroke="#7aa0d0"/><rect x="0.5" y="9.5" width="4" height="4" fill="#fff" stroke="#7aa0d0"/><path d="M6 2.5h6M6 7h2M9 7h3M6 11.5h6" stroke="#7aa0d0"/><rect x="5.5" y="5.5" width="2" height="2" fill="#fff" stroke="#7aa0d0"/></svg>
<div class="t cj" style="left:193px;top:782px;line-height:24px;color:#8a8a8a">大纲</div>
<svg class="i" style="left:425px;top:786px" width="10" height="4" viewBox="0 0 10 4"><rect x="0.5" y="0.5" width="9" height="3" fill="#fff" stroke="#5a5a5a"/></svg>
<svg class="i" style="left:448px;top:786px" width="11" height="10" viewBox="0 0 11 10"><rect x="0.5" y="0.5" width="9.5" height="9" fill="#fff" stroke="#5a5a5a"/><path d="M0.5 2.5h9.5" stroke="#5a5a5a"/></svg>
<svg class="i" style="left:251px;top:815px" width="13" height="13" viewBox="0 0 13 13"><rect x="0.5" y="0.5" width="10" height="10" fill="#e8f0f8" stroke="#9ab"/><rect x="2.5" y="2.5" width="10" height="10" fill="#f4f8fc" stroke="#8a9ab0"/><path d="M4 7.5h7" stroke="#1a4a8a" stroke-width="1.5"/></svg>
<svg class="i" style="left:272px;top:813px" width="16" height="16" viewBox="0 0 16 16"><path d="M6 1.5L1.5 4.5L6 7.5V5.5h6v-2H6z" fill="#fbe09a" stroke="#c8901a"/><path d="M10 8.5l4.5 3l-4.5 3v-2H4v-2h6z" fill="#fbe09a" stroke="#c8901a"/></svg>
<div class="a" style="left:294px;top:812px;width:1px;height:18px;background:#666"></div>
<div class="a" style="left:300px;top:810px;width:23px;height:21px;background:#cde4fb;border:1px solid #99c4f0"></div>
<svg class="i" style="left:306px;top:814px" width="12" height="13" viewBox="0 0 12 13"><path d="M2.5 1.5v10h6M2.5 6h6M4 1.5h6" stroke="#4a6a90" fill="none"/><rect x="7.5" y="4.5" width="3" height="3" fill="#fff" stroke="#4a6a90"/><rect x="7.5" y="9.5" width="3" height="3" fill="#fff" stroke="#4a6a90"/></svg>
<div class="a" style="left:325px;top:812px;width:1px;height:18px;background:#666"></div>
<svg class="i" style="left:334px;top:813px" width="17" height="15" viewBox="0 0 17 15"><path d="M1 7h5c1-3 5-4 7-2c2 2 1 6-2 6c-2 0-3-1-3-2" fill="#f0c030" stroke="#8a5a10" stroke-width="1.3"/><path d="M12 2l1 2l2 1l-2 1l-1 2l-1-2l-2-1l2-1z" fill="#fff3b0" stroke="#c89010"/></svg>
<div class="a" style="left:356px;top:812px;width:1px;height:18px;background:#666"></div>
<svg class="i" style="left:365px;top:813px" width="16" height="16" viewBox="0 0 16 16"><path d="M1.5 6.5v8h13v-8h-3v5h-7v-5z" fill="#a8c0e0" stroke="#4a6aa0"/><path d="M3 1l6 6M9 3v4h-4" stroke="#1a3a8a" fill="none" stroke-width="1.2"/></svg>
<svg class="i" style="left:388px;top:813px" width="16" height="16" viewBox="0 0 16 16"><path d="M1.5 6.5v8h13v-8h-3v5h-7v-5z" fill="#a8c0e0" stroke="#4a6aa0"/><path d="M6 9l7-7M9 2h4v4" stroke="#1a3a8a" fill="none" stroke-width="1.2"/></svg>
<div class="a" style="left:410px;top:812px;width:1px;height:18px;background:#666"></div>
<svg class="i" style="left:421px;top:813px" width="16" height="16" viewBox="0 0 16 16"><rect x="1.5" y="1.5" width="11" height="14" fill="#8cb4e0" stroke="#3a6aaa"/><rect x="4.5" y="8.5" width="11" height="7" fill="#f0f4f8" stroke="#a08a50"/><path d="M6 11h7M6 13h7" stroke="#7a9ac0"/><path d="M4 4h6" stroke="#fff"/></svg>
<svg class="i" style="left:449px;top:816px" width="12" height="7" viewBox="0 0 12 7"><path d="M0.5 0.5h11l-5.5 5.5z" fill="#fff" stroke="#666"/></svg>
<svg class="i" style="left:482px;top:70px" width="16" height="16" viewBox="0 0 16 16"><rect x="1" y="2" width="14" height="12" fill="#c8c8c8"/><rect x="0.5" y="1.5" width="14" height="11" fill="url(#gW)" stroke="#a0a8a0"/><rect x="0.5" y="1.5" width="14" height="3" fill="#4a8ad0" stroke="#3a6aa8"/><path d="M2 3h11" stroke="#c8e0f8"/><path d="M7.5 5.5h6.5v10h-6.5z" fill="url(#gY)" stroke="#e0a030"/><rect x="9.5" y="9.5" width="4.5" height="6" rx="1" fill="#f8c040" stroke="#d07010"/></svg>
<div class="t" style="left:502px;top:67px;line-height:24px;font-size:16px">*safety.datasetx</div>
<svg class="i" style="left:624px;top:73px" width="10" height="10" viewBox="0 0 10 10"><path d="M0.5 0.5H3L5 2.6L7 0.5H9.5V3L7.4 5L9.5 7V9.5H7L5 7.4L3 9.5H0.5V7L2.6 5L0.5 3Z" fill="#fff" stroke="#505050"/></svg>
<svg class="i" style="left:1552px;top:70px" width="10" height="4" viewBox="0 0 10 4"><rect x="0.5" y="0.5" width="9" height="3" fill="#fff" stroke="#5a5a5a"/></svg>
<svg class="i" style="left:1575px;top:70px" width="11" height="10" viewBox="0 0 11 10"><rect x="0.5" y="0.5" width="9.5" height="9" fill="#fff" stroke="#5a5a5a"/><path d="M0.5 2.5h9.5" stroke="#5a5a5a"/></svg>
<svg class="i" style="left:1610px;top:69px" width="16" height="16" viewBox="0 0 16 16"><path d="M5 2h6v1.5H5z" fill="#f0c050" stroke="#a07010"/><path d="M4.5 4.5h7l2 6h-11z" fill="#e8eef8" stroke="#4a6aa0"/><rect x="1.5" y="11.5" width="7" height="4" fill="#e05020" stroke="#a03010"/><rect x="1.5" y="10" width="7" height="2" fill="#40a040"/><rect x="9.5" y="8.5" width="6" height="7" fill="#fff8e0" stroke="#a08a50"/><path d="M11 12h3" stroke="#3a6aaa"/></svg>
<div class="t cj" style="left:1628px;top:67px;line-height:24px">构...</div>
<svg class="i" style="left:1673px;top:73px" width="10" height="10" viewBox="0 0 10 10"><path d="M0.5 0.5H3L5 2.6L7 0.5H9.5V3L7.4 5L9.5 7V9.5H7L5 7.4L3 9.5H0.5V7L2.6 5L0.5 3Z" fill="#fff" stroke="#505050"/></svg>
<div class="a" style="left:1695px;top:69px;opacity:.55"><svg class="i" style="left:0px;top:0px" width="16" height="16" viewBox="0 0 16 16"><circle cx="3" cy="3" r="2.5" fill="#90d090"/><path d="M3 3l10 4" stroke="#ccc"/><rect x="5.5" y="6.5" width="9" height="7" fill="#dde8f4" stroke="#8aa0c0"/><rect x="7" y="8" width="6" height="3" fill="#8ab0e0"/><path d="M10 13.5v2M7 15.5h6" stroke="#8aa0c0"/></svg></div>
<div class="t cj" style="left:1715px;top:67px;line-height:24px;color:#9aa8c0">业...</div>
<div class="a" style="left:1761px;top:69px;opacity:.7"><svg class="i" style="left:0px;top:0px" width="16" height="16" viewBox="0 0 16 16"><circle cx="8" cy="8" r="7.5" fill="#9ad09a"/><path d="M8 0.5a7.5 7.5 0 0 1 7.5 7.5H8z" fill="#f0a040"/><circle cx="9" cy="7" r="3" fill="#777"/><path d="M4 15c0-4 2-5 5-5s5 1 5 5z" fill="#666"/></svg></div>
<div class="t cj" style="left:1780px;top:67px;line-height:24px;color:#9aa0b8">组...</div>
<div class="a" style="left:0px;top:37px;width:2px;height:2px;background:#aaa290"></div><div class="a" style="left:0px;top:42px;width:2px;height:2px;background:#aaa290"></div><div class="a" style="left:0px;top:46px;width:2px;height:2px;background:#aaa290"></div><div class="a" style="left:0px;top:51px;width:2px;height:2px;background:#aaa290"></div><svg class="i" style="left:9px;top:37px" width="15" height="14" viewBox="0 0 15 14"><rect x="0.5" y="2.5" width="12" height="11" fill="#eef6fc" stroke="#8a7a50"/><rect x="1" y="3" width="11" height="2" fill="#3a8ad8"/><path d="M11.5 0.5l1 2l2 1l-2 1l-1 2l-1-2l-2-1l2-1z" fill="#fff5c0" stroke="#b89030"/></svg><svg class="i" style="left:32px;top:42px" width="10" height="5" viewBox="0 0 10 5"><path d="M0 0h10l-5 5z" fill="#111"/></svg><svg class="i" style="left:50px;top:37px" width="15" height="14" viewBox="0 0 15 14"><path d="M0.5 0.5h12l2 2v11h-14z" fill="#ddd" stroke="#aaa"/><rect x="3.5" y="1" width="8" height="5" fill="#f4f4f4" stroke="#bbb"/><rect x="4.5" y="9.5" width="6" height="4" fill="#eee" stroke="#aaa"/></svg><svg class="i" style="left:73px;top:37px" width="15" height="15" viewBox="0 0 15 15"><path d="M0.5 0.5h9v10h-9z" fill="#e4eaf2" stroke="#a0b0c8"/><path d="M2.5 2.5h9v10h-9z" fill="#e4eaf2" stroke="#a0b0c8"/><path d="M4.5 4.5h10v10h-10z" fill="#e8ecf4" stroke="#8aa0c0"/><rect x="7.5" y="10.5" width="4" height="3" fill="#4a6aa0"/></svg><div class="a" style="left:94px;top:37px;width:2px;height:2px;background:#aaa290"></div><div class="a" style="left:94px;top:42px;width:2px;height:2px;background:#aaa290"></div><div class="a" style="left:94px;top:46px;width:2px;height:2px;background:#aaa290"></div><div class="a" style="left:94px;top:51px;width:2px;height:2px;background:#aaa290"></div><svg class="i" style="left:102px;top:37px" width="13" height="13" viewBox="0 0 13 13"><rect x="0.5" y="0.5" width="12" height="9" rx="1" fill="#e8f0fa" stroke="#2a5aa8" stroke-width="1.2"/><path d="M3 4h6M3 6h4" stroke="#2a5aa8"/><path d="M3 12h7" stroke="#2a5aa8" stroke-width="1.5"/></svg><div class="a" style="left:122px;top:37px;width:2px;height:2px;background:#aaa290"></div><div class="a" style="left:122px;top:42px;width:2px;height:2px;background:#aaa290"></div><div class="a" style="left:122px;top:46px;width:2px;height:2px;background:#aaa290"></div><div class="a" style="left:122px;top:51px;width:2px;height:2px;background:#aaa290"></div><svg class="i" style="left:129px;top:38px" width="14" height="14" viewBox="0 0 14 14"><path d="M7 0.5l6 3.5v6l-6 3.5l-6-3.5v-6z" fill="#1e9a1e" stroke="#107010"/><path d="M4.5 5.5a3.3 3.3 0 1 0 5 0M7 3.5v4" stroke="#fff" stroke-width="1.3" fill="none"/></svg><div class="a" style="left:150px;top:37px;width:2px;height:2px;background:#aaa290"></div><div class="a" style="left:150px;top:42px;width:2px;height:2px;background:#aaa290"></div><div class="a" style="left:150px;top:46px;width:2px;height:2px;background:#aaa290"></div><div class="a" style="left:150px;top:51px;width:2px;height:2px;background:#aaa290"></div><svg class="i" style="left:158px;top:37px" width="15" height="15" viewBox="0 0 15 15"><ellipse cx="7.5" cy="8.5" rx="3.5" ry="4.5" fill="#a8c890" stroke="#4a6a3a"/><path d="M1 4l3 2M14 4l-3 2M0.5 9h3M11.5 9h3M1 14l3-2M14 14l-3-2M5 2l1.5 2M10 2l-1.5 2" stroke="#4a6a3a" stroke-width="1.1"/></svg><svg class="i" style="left:181px;top:42px" width="10" height="5" viewBox="0 0 10 5"><path d="M0 0h10l-5 5z" fill="#111"/></svg><svg class="i" style="left:200px;top:38px" width="14" height="14" viewBox="0 0 14 14"><circle cx="7" cy="7" r="6.5" fill="#2aa02a" stroke="#187018"/><path d="M5 3.5l5 3.5l-5 3.5z" fill="#fff"/></svg><svg class="i" style="left:223px;top:42px" width="10" height="5" viewBox="0 0 10 5"><path d="M0 0h10l-5 5z" fill="#111"/></svg><svg class="i" style="left:241px;top:36px" width="17" height="16" viewBox="0 0 17 16"><circle cx="6" cy="6" r="5.5" fill="#2aa02a" stroke="#187018"/><path d="M4.5 3.5l4 2.5l-4 2.5z" fill="#fff"/><rect x="8.5" y="9.5" width="8" height="6" fill="#e02020" stroke="#901010"/><path d="M10 12h5" stroke="#fff"/></svg><svg class="i" style="left:265px;top:42px" width="10" height="5" viewBox="0 0 10 5"><path d="M0 0h10l-5 5z" fill="#111"/></svg><svg class="i" style="left:286px;top:39px" width="11" height="11" viewBox="0 0 11 11"><rect x="0.5" y="0.5" width="10" height="10" fill="#d8c8cc" stroke="#c0b0b4"/></svg><svg class="i" style="left:307px;top:42px" width="10" height="5" viewBox="0 0 10 5"><path d="M0 0h10l-5 5z" fill="#777"/></svg><svg class="i" style="left:327px;top:36px" width="15" height="16" viewBox="0 0 15 16"><rect x="0.5" y="0.5" width="9" height="9" fill="#d8c8cc" stroke="#bbb"/><path d="M8 9l6 3.5l-6 3.5z" fill="#b8d0b8"/></svg><svg class="i" style="left:349px;top:42px" width="10" height="5" viewBox="0 0 10 5"><path d="M0 0h10l-5 5z" fill="#777"/></svg><div class="a" style="left:365px;top:37px;width:2px;height:2px;background:#aaa290"></div><div class="a" style="left:365px;top:42px;width:2px;height:2px;background:#aaa290"></div><div class="a" style="left:365px;top:46px;width:2px;height:2px;background:#aaa290"></div><div class="a" style="left:365px;top:51px;width:2px;height:2px;background:#aaa290"></div><svg class="i" style="left:371px;top:37px" width="17" height="15" viewBox="0 0 17 15"><path d="M0.5 6.5h5l1 1h6v7h-12z" fill="#fbd890" stroke="#c08a30"/><path d="M0.5 14.5l3-6h12l-3 6z" fill="#fde8b0" stroke="#c08a30"/><circle cx="7" cy="4" r="3.5" fill="#6a4aa8"/><circle cx="12" cy="6" r="3.5" fill="#3a9a3a"/></svg><svg class="i" style="left:394px;top:38px" width="16" height="14" viewBox="0 0 16 14"><path d="M0.5 5.5h5l1 1h6v7h-12z" fill="#fbd890" stroke="#c08a30"/><path d="M0.5 13.5l3-6h12l-3 6z" fill="#fde8b0" stroke="#c08a30"/><rect x="6.5" y="1.5" width="6" height="5" fill="#e8f0f8" stroke="#4a6aa0"/></svg><svg class="i" style="left:418px;top:37px" width="16" height="16" viewBox="0 0 16 16"><path d="M3 13l8-10l3 3l-10 8z" fill="#c8c8c8" stroke="#8a8a8a"/><path d="M11 3l2-2.5l2.5 2.5l-2.5 2z" fill="#f0c040" stroke="#b08020"/><path d="M1 15.5l2-3l1.5 1.5z" fill="#ffe080"/></svg><svg class="i" style="left:442px;top:42px" width="10" height="5" viewBox="0 0 10 5"><path d="M0 0h10l-5 5z" fill="#111"/></svg><svg class="i" style="left:460px;top:38px" width="16" height="14" viewBox="0 0 16 14"><path d="M0.5 5.5h5l1 1h6v7h-12z" fill="#fbd890" stroke="#c08a30"/><path d="M0.5 13.5l3-6h12l-3 6z" fill="#fde8b0" stroke="#c08a30"/><ellipse cx="11" cy="5" rx="4" ry="3.5" fill="#a06a3a" stroke="#6a4020"/></svg><div class="a" style="left:481px;top:37px;width:2px;height:2px;background:#aaa290"></div><div class="a" style="left:481px;top:42px;width:2px;height:2px;background:#aaa290"></div><div class="a" style="left:481px;top:46px;width:2px;height:2px;background:#aaa290"></div><div class="a" style="left:481px;top:51px;width:2px;height:2px;background:#aaa290"></div><svg class="i" style="left:489px;top:36px" width="14" height="16" viewBox="0 0 14 16"><path d="M4.5 3.5h9v12h-9z" fill="#f4f4f4" stroke="#bbb"/><path d="M6 7h6M6 9h6M6 11h6" stroke="#ccc"/><path d="M2.5 0.5v8h-2l4 4l4-4h-2v-8z" fill="#e8e8e8" stroke="#bbb"/></svg><svg class="i" style="left:512px;top:42px" width="10" height="5" viewBox="0 0 10 5"><path d="M0 0h10l-5 5z" fill="#777"/></svg><svg class="i" style="left:531px;top:36px" width="14" height="16" viewBox="0 0 14 16"><path d="M4.5 0.5h9v12h-9z" fill="#f4f4f4" stroke="#bbb"/><path d="M6 4h6M6 6h6M6 8h6" stroke="#ccc"/><path d="M2.5 15.5v-8h-2l4-4l4 4h-2v8z" fill="#e8e8e8" stroke="#bbb"/></svg><svg class="i" style="left:554px;top:42px" width="10" height="5" viewBox="0 0 10 5"><path d="M0 0h10l-5 5z" fill="#777"/></svg><svg class="i" style="left:571px;top:38px" width="16" height="12" viewBox="0 0 16 12"><path d="M6.5 1.5l-5 4.5l5 4.5v-2.5h8v-4h-8z" fill="#f4f4f4" stroke="#c0c0c0"/><path d="M3 0l1 2M1 1l2 1" stroke="#888"/></svg><svg class="i" style="left:596px;top:38px" width="15" height="12" viewBox="0 0 15 12"><path d="M6.5 0.5l-6 5.5l6 5.5v-3h8v-5h-8z" fill="#fce8a0" stroke="#d09020" stroke-width="1.2"/></svg><svg class="i" style="left:619px;top:42px" width="10" height="5" viewBox="0 0 10 5"><path d="M0 0h10l-5 5z" fill="#111"/></svg><svg class="i" style="left:638px;top:38px" width="15" height="12" viewBox="0 0 15 12"><path d="M8.5 0.5l6 5.5l-6 5.5v-3h-8v-5h8z" fill="#f8f8f8" stroke="#b8b8b8" stroke-width="1.2"/></svg><svg class="i" style="left:661px;top:42px" width="10" height="5" viewBox="0 0 10 5"><path d="M0 0h10l-5 5z" fill="#777"/></svg><div class="a" style="left:677px;top:37px;width:2px;height:2px;background:#aaa290"></div><div class="a" style="left:677px;top:42px;width:2px;height:2px;background:#aaa290"></div><div class="a" style="left:677px;top:46px;width:2px;height:2px;background:#aaa290"></div><div class="a" style="left:677px;top:51px;width:2px;height:2px;background:#aaa290"></div><svg class="i" style="left:684px;top:37px" width="15" height="15" viewBox="0 0 15 15"><path d="M13 1c2 4 0 8-5 8h-2v3l-5-4.5l5-4.5v3h2c3 0 4-2 3-5z" fill="#f4f4f4" stroke="#c4c4c4"/></svg><svg class="i" style="left:706px;top:37px" width="15" height="15" viewBox="0 0 15 15"><path d="M2 1c-2 4 0 8 5 8h2v3l5-4.5l-5-4.5v3h-2c-3 0-4-2-3-5z" fill="#f4f4f4" stroke="#c4c4c4"/></svg><svg class="i" style="left:731px;top:38px" width="14" height="14" viewBox="0 0 14 14"><path d="M2 2l10 10M12 2l-10 10" stroke="#e02828" stroke-width="3.2" stroke-linecap="round"/></svg><svg class="i" style="left:754px;top:37px" width="14" height="15" viewBox="0 0 14 15"><circle cx="6" cy="6" r="5" fill="#f8f8f8" stroke="#777" stroke-width="1.2"/><path d="M3.5 6h5M6 3.5v5" stroke="#555" stroke-width="1.2"/><path d="M9.5 9.5l4 4" stroke="#777" stroke-width="2"/></svg><svg class="i" style="left:777px;top:37px" width="14" height="15" viewBox="0 0 14 15"><circle cx="6" cy="6" r="5" fill="#f8f8f8" stroke="#777" stroke-width="1.2"/><path d="M3.5 6h5" stroke="#555" stroke-width="1.2"/><path d="M9.5 9.5l4 4" stroke="#777" stroke-width="2"/></svg><div class="a" style="left:796px;top:33px;width:1px;height:22px;background:#a0a0a0"></div><div class="a" style="left:797px;top:33px;width:54px;height:22px;background:#f0f0f0"></div><div class="a" style="left:851px;top:33px;width:23px;height:22px;background:#fff"></div><svg class="i" style="left:860px;top:42px" width="10" height="6" viewBox="0 0 10 6"><path d="M0.5 0.5l4.5 4.5l4.5-4.5" fill="none" stroke="#777"/></svg><div class="a" style="left:874px;top:33px;width:1px;height:22px;background:#a0a0a0"></div><svg class="i" style="left:880px;top:36px" width="14" height="16" viewBox="0 0 14 16"><rect x="0.5" y="0.5" width="4" height="4" fill="#fff" stroke="#999"/><path d="M2.5 5v9M2.5 8h5M2.5 13h5" stroke="#999" stroke-dasharray="1 1"/><rect x="7.5" y="5.5" width="6" height="4" fill="#999"/><rect x="7.5" y="11" width="6" height="4" fill="#999"/></svg><svg class="i" style="left:903px;top:42px" width="10" height="5" viewBox="0 0 10 5"><path d="M0 0h10l-5 5z" fill="#777"/></svg><svg class="i" style="left:922px;top:37px" width="14" height="14" viewBox="0 0 14 14"><path d="M1 13v-6l2-6h3v12z M13 13v-6l-2-6h-3v12z" fill="#999" stroke="#777"/><rect x="5.5" y="4" width="3" height="4" fill="#888"/></svg><div class="a" style="left:1773px;top:31px;width:50px;height:26px;background:#fff;border:1px solid #666"></div><div class="t cj" style="left:1776px;top:34px;line-height:22px;color:#444">快速访问</div>
<div class="a" style="left:479px;top:93px;width:1118px;height:21px;background:#f5f6fb"></div><div class="t" style="left:480px;top:95px;line-height:20px;font-size:17px;letter-spacing:0.06px">com.primeton.gocom.afcenter.model/src/com/primeton/gocom/afcenter/model/safety.datasetx</div><div class="a" style="left:479px;top:114px;width:1118px;height:1px;background:#a0a0a0"></div><div class="a" style="left:480px;top:115px;width:121px;height:28px;background:linear-gradient(#fbfbfb,#f0f0f0)"></div><div class="a" style="left:480px;top:143px;width:121px;height:1px;background:#a8a8a8"></div><svg class="i" style="left:490px;top:125px" width="8" height="11" viewBox="0 0 8 11"><path d="M7 0.5v10L0.8 5.5z" fill="#fff" stroke="#666"/></svg><svg class="i" style="left:512px;top:122px" width="15" height="15" viewBox="0 0 15 15"><circle cx="7.5" cy="7.5" r="7" fill="#f4f4f8" stroke="#c8c8d0"/><circle cx="5" cy="3.5" r="1.3" fill="none" stroke="#f0a000"/><circle cx="9" cy="3.5" r="1.3" fill="none" stroke="#30a030"/><circle cx="3.5" cy="7" r="1.3" fill="none" stroke="#f06000"/><circle cx="11" cy="7" r="1.3" fill="none" stroke="#30a030"/><circle cx="5.5" cy="10.5" r="1.3" fill="none" stroke="#e03030"/><circle cx="9" cy="10.5" r="1.3" fill="none" stroke="#2050e0"/></svg><div class="t" style="left:530px;top:120px;line-height:22px;font-size:16px">Palette</div><div class="a" style="left:494px;top:147px;width:93px;height:24px;background:#cce0f8;border-radius:3px"></div><svg class="i" style="left:500px;top:149px" width="10" height="15" viewBox="0 0 10 15"><path d="M0.5 0.5v12l3-3l2.5 5l2-1l-2.5-5h4z" fill="#fff" stroke="#7a7a6a"/></svg><div class="t" style="left:515px;top:149px;line-height:22px;font-size:16px">Select</div><div class="a" style="left:483px;top:175px;width:115px;height:1px;background:#a8a8a8"></div><svg class="i" style="left:496px;top:184px" width="17" height="9" viewBox="0 0 17 9"><path d="M0 4.5h12" stroke="#1a7ae8" stroke-width="1.2"/><path d="M11 0.5l5 4l-5 4z" fill="#1a7ae8"/></svg><div class="t cj" style="left:515px;top:181px;line-height:22px">单向1:1关联</div><svg class="i" style="left:496px;top:211px" width="17" height="9" viewBox="0 0 17 9"><path d="M0 4.5h12" stroke="#d020b0" stroke-width="1.2"/><path d="M11 0.5l5 4l-5 4z" fill="#d020b0"/></svg><div class="t cj" style="left:515px;top:208px;line-height:22px">单向1:n关联</div><svg class="i" style="left:496px;top:238px" width="17" height="9" viewBox="0 0 17 9"><path d="M0 4.5h12" stroke="#50b020" stroke-width="1.2"/><path d="M11 0.5l5 4l-5 4z" fill="#50b020"/></svg><div class="t cj" style="left:515px;top:235px;line-height:22px">单向n:1关联</div><div class="a" style="left:496px;top:269px;width:16px;height:1px;background:#d020b0"></div><div class="t cj" style="left:515px;top:262px;line-height:22px">双向1:n关联</div><div class="a" style="left:480px;top:288px;width:120px;height:1px;background:#b0b0b0"></div><div class="a" style="left:480px;top:290px;width:120px;height:24px;background:#f0f0f0;border-top:1px solid #d8d8d8"></div><svg class="i" style="left:483px;top:296px" width="15" height="12" viewBox="0 0 15 12"><path d="M0.5 1.5h5l1 1h6v2" fill="none" stroke="#c08a30"/><path d="M0.5 11.5v-10M0.5 11.5h11l3-6h-11z" fill="#fbd890" stroke="#c08a30"/></svg><div class="t cj" style="left:501px;top:292px;line-height:22px">基本</div><svg class="i" style="left:588px;top:298px" width="10" height="7" viewBox="0 0 10 7"><path d="M4.5 0.5L0.8 3.5l3.7 3M5.5 0.5l3.7 3l-3.7 3" fill="none" stroke="#999"/></svg><svg class="i" style="left:496px;top:319px" width="16" height="16" viewBox="0 0 16 16"><rect x="0.5" y="0.5" width="14" height="11" fill="#e8f0ff" stroke="#3a6ad0"/><rect x="1" y="1" width="13" height="3" fill="#7aa0f0"/><path d="M0.5 6.5h9" stroke="#3a6ad0"/><rect x="7.5" y="7.5" width="8" height="8" fill="#f8f8f8" stroke="#777"/><path d="M9.5 10h4M9.5 12h4" stroke="#3a7a9a"/></svg><div class="t cj" style="left:515px;top:319px;line-height:22px">实体</div><svg class="i" style="left:496px;top:346px" width="16" height="16" viewBox="0 0 16 16"><rect x="0.5" y="0.5" width="14" height="11" fill="#e8f8d8" stroke="#4aa02a"/><rect x="1" y="1" width="13" height="3" fill="#8ad05a"/><path d="M0.5 6.5h9" stroke="#4aa02a"/><rect x="8.5" y="6.5" width="7" height="9" rx="2" fill="#f6c340" stroke="#c27a12"/></svg><div class="t cj" style="left:515px;top:347px;line-height:22px">持久化实体</div><svg class="i" style="left:496px;top:374px" width="16" height="15" viewBox="0 0 16 15"><rect x="0.5" y="0.5" width="12" height="10" fill="#f4e8fc" stroke="#8a3ab0"/><rect x="1" y="1" width="11" height="3" fill="#b070d0"/><circle cx="10" cy="10" r="3" fill="#d8eaf8" stroke="#3a6aa0"/><path d="M12 12l3 3" stroke="#3a6aa0" stroke-width="1.5"/></svg><div class="t cj" style="left:515px;top:374px;line-height:22px">查询实体</div><svg class="i" style="left:496px;top:400px" width="16" height="16" viewBox="0 0 16 16"><path d="M0.5 2.5h12v10l-3 3h-9z" fill="#f8e8a0" stroke="#a08020"/><path d="M5 11l8-9l2 2l-8 8l-3 1z" fill="#f0f0f0" stroke="#555"/><path d="M13 2l1.5-1.5l2 2L15 4z" fill="#e05050"/></svg><div class="t cj" style="left:515px;top:401px;line-height:22px">注释</div><div class="a" style="left:603px;top:115px;width:1px;height:872px;background:#a0a0a0"></div><div class="a" style="left:621px;top:115px;width:1px;height:872px;background:#a0a0a0"></div><div class="a" style="left:604px;top:115px;width:17px;height:18px;background:#f1f3f9"></div><div class="a" style="left:622px;top:133px;width:975px;height:1px;background:#a0a0a0"></div><div class="a" style="left:622px;top:131px;width:975px;height:2px;background:#ececec"></div><div class="a" style="left:637px;top:123px;width:1px;height:2px;background:#000"></div><div class="a" style="left:652px;top:123px;width:1px;height:2px;background:#000"></div><div class="a" style="left:667px;top:123px;width:1px;height:2px;background:#000"></div><div class="a" style="left:682px;top:122px;width:1px;height:5px;background:#000"></div><div class="a" style="left:697px;top:123px;width:1px;height:2px;background:#000"></div><div class="a" style="left:712px;top:123px;width:1px;height:2px;background:#000"></div><div class="a" style="left:727px;top:123px;width:1px;height:2px;background:#000"></div><div class="a" style="left:736px;top:131px;width:12px;height:2px;background:#fff"></div><div class="t" style="left:738px;top:115px;line-height:16px;font-size:14px">1</div><div class="a" style="left:757px;top:123px;width:1px;height:2px;background:#000"></div><div class="a" style="left:772px;top:123px;width:1px;height:2px;background:#000"></div><div class="a" style="left:787px;top:123px;width:1px;height:2px;background:#000"></div><div class="a" style="left:802px;top:122px;width:1px;height:5px;background:#000"></div><div class="a" style="left:817px;top:123px;width:1px;height:2px;background:#000"></div><div class="a" style="left:832px;top:123px;width:1px;height:2px;background:#000"></div><div class="a" style="left:847px;top:123px;width:1px;height:2px;background:#000"></div><div class="a" style="left:856px;top:131px;width:12px;height:2px;background:#fff"></div><div class="t" style="left:858px;top:115px;line-height:16px;font-size:14px">2</div><div class="a" style="left:877px;top:123px;width:1px;height:2px;background:#000"></div><div class="a" style="left:892px;top:123px;width:1px;height:2px;background:#000"></div><div class="a" style="left:907px;top:123px;width:1px;height:2px;background:#000"></div><div class="a" style="left:922px;top:122px;width:1px;height:5px;background:#000"></div><div class="a" style="left:937px;top:123px;width:1px;height:2px;background:#000"></div><div class="a" style="left:952px;top:123px;width:1px;height:2px;background:#000"></div><div class="a" style="left:967px;top:123px;width:1px;height:2px;background:#000"></div><div class="a" style="left:976px;top:131px;width:12px;height:2px;background:#fff"></div><div class="t" style="left:978px;top:115px;line-height:16px;font-size:14px">3</div><div class="a" style="left:997px;top:123px;width:1px;height:2px;background:#000"></div><div class="a" style="left:1012px;top:123px;width:1px;height:2px;background:#000"></div><div class="a" style="left:1027px;top:123px;width:1px;height:2px;background:#000"></div><div class="a" style="left:1042px;top:122px;width:1px;height:5px;background:#000"></div><div class="a" style="left:1057px;top:123px;width:1px;height:2px;background:#000"></div><div class="a" style="left:1072px;top:123px;width:1px;height:2px;background:#000"></div><div class="a" style="left:1087px;top:123px;width:1px;height:2px;background:#000"></div><div class="a" style="left:1096px;top:131px;width:12px;height:2px;background:#fff"></div><div class="t" style="left:1098px;top:115px;line-height:16px;font-size:14px">4</div><div class="a" style="left:1117px;top:123px;width:1px;height:2px;background:#000"></div><div class="a" style="left:1132px;top:123px;width:1px;height:2px;background:#000"></div><div class="a" style="left:1147px;top:123px;width:1px;height:2px;background:#000"></div><div class="a" style="left:1162px;top:122px;width:1px;height:5px;background:#000"></div><div class="a" style="left:1177px;top:123px;width:1px;height:2px;background:#000"></div><div class="a" style="left:1192px;top:123px;width:1px;height:2px;background:#000"></div><div class="a" style="left:1207px;top:123px;width:1px;height:2px;background:#000"></div><div class="a" style="left:1216px;top:131px;width:12px;height:2px;background:#fff"></div><div class="t" style="left:1218px;top:115px;line-height:16px;font-size:14px">5</div><div class="a" style="left:1237px;top:123px;width:1px;height:2px;background:#000"></div><div class="a" style="left:1252px;top:123px;width:1px;height:2px;background:#000"></div><div class="a" style="left:1267px;top:123px;width:1px;height:2px;background:#000"></div><div class="a" style="left:1282px;top:122px;width:1px;height:5px;background:#000"></div><div class="a" style="left:1297px;top:123px;width:1px;height:2px;background:#000"></div><div class="a" style="left:1312px;top:123px;width:1px;height:2px;background:#000"></div><div class="a" style="left:1327px;top:123px;width:1px;height:2px;background:#000"></div><div class="a" style="left:1336px;top:131px;width:12px;height:2px;background:#fff"></div><div class="t" style="left:1338px;top:115px;line-height:16px;font-size:14px">6</div><div class="a" style="left:1357px;top:123px;width:1px;height:2px;background:#000"></div><div class="a" style="left:1372px;top:123px;width:1px;height:2px;background:#000"></div><div class="a" style="left:1387px;top:123px;width:1px;height:2px;background:#000"></div><div class="a" style="left:1402px;top:122px;width:1px;height:5px;background:#000"></div><div class="a" style="left:1417px;top:123px;width:1px;height:2px;background:#000"></div><div class="a" style="left:1432px;top:123px;width:1px;height:2px;background:#000"></div><div class="a" style="left:1447px;top:123px;width:1px;height:2px;background:#000"></div><div class="a" style="left:1456px;top:131px;width:12px;height:2px;background:#fff"></div><div class="t" style="left:1458px;top:115px;line-height:16px;font-size:14px">7</div><div class="a" style="left:1477px;top:123px;width:1px;height:2px;background:#000"></div><div class="a" style="left:1492px;top:123px;width:1px;height:2px;background:#000"></div><div class="a" style="left:1507px;top:123px;width:1px;height:2px;background:#000"></div><div class="a" style="left:1522px;top:122px;width:1px;height:5px;background:#000"></div><div class="a" style="left:1537px;top:123px;width:1px;height:2px;background:#000"></div><div class="a" style="left:1552px;top:123px;width:1px;height:2px;background:#000"></div><div class="a" style="left:1567px;top:123px;width:1px;height:2px;background:#000"></div><div class="a" style="left:1576px;top:131px;width:12px;height:2px;background:#fff"></div><div class="t" style="left:1578px;top:115px;line-height:16px;font-size:14px">8</div><div class="t" style="left:621px;top:115px;width:6px;overflow:hidden;line-height:16px;font-size:13px"><span style="margin-left:-3px">0</span></div><div class="a" style="left:619px;top:134px;width:2px;height:853px;background:#ececec"></div><div class="a" style="left:604px;top:134px;width:17px;height:5px;overflow:hidden"><div class="t" style="left:6px;top:-11px;line-height:14px;font-size:14px;transform:rotate(-90deg);transform-origin:7px 7px">0</div></div><div class="a" style="left:611px;top:149px;width:2px;height:1px;background:#000"></div><div class="a" style="left:611px;top:164px;width:2px;height:1px;background:#000"></div><div class="a" style="left:611px;top:179px;width:2px;height:1px;background:#000"></div><div class="a" style="left:610px;top:194px;width:5px;height:1px;background:#000"></div><div class="a" style="left:611px;top:209px;width:2px;height:1px;background:#000"></div><div class="a" style="left:611px;top:224px;width:2px;height:1px;background:#000"></div><div class="a" style="left:611px;top:239px;width:2px;height:1px;background:#000"></div><div class="a" style="left:619px;top:248px;width:2px;height:12px;background:#fff"></div><div class="a" style="left:604px;top:243px;width:17px;height:14px;overflow:hidden"><div class="t" style="left:6px;top:0;line-height:14px;font-size:13px;transform:rotate(-90deg);transform-origin:7px 7px">1</div></div><div class="a" style="left:611px;top:269px;width:2px;height:1px;background:#000"></div><div class="a" style="left:611px;top:284px;width:2px;height:1px;background:#000"></div><div class="a" style="left:611px;top:299px;width:2px;height:1px;background:#000"></div><div class="a" style="left:610px;top:314px;width:5px;height:1px;background:#000"></div><div class="a" style="left:611px;top:329px;width:2px;height:1px;background:#000"></div><div class="a" style="left:611px;top:344px;width:2px;height:1px;background:#000"></div><div class="a" style="left:611px;top:359px;width:2px;height:1px;background:#000"></div><div class="a" style="left:619px;top:368px;width:2px;height:12px;background:#fff"></div><div class="a" style="left:604px;top:363px;width:17px;height:14px;overflow:hidden"><div class="t" style="left:6px;top:0;line-height:14px;font-size:13px;transform:rotate(-90deg);transform-origin:7px 7px">2</div></div><div class="a" style="left:611px;top:389px;width:2px;height:1px;background:#000"></div><div class="a" style="left:611px;top:404px;width:2px;height:1px;background:#000"></div><div class="a" style="left:611px;top:419px;width:2px;height:1px;background:#000"></div><div class="a" style="left:610px;top:434px;width:5px;height:1px;background:#000"></div><div class="a" style="left:611px;top:449px;width:2px;height:1px;background:#000"></div><div class="a" style="left:611px;top:464px;width:2px;height:1px;background:#000"></div><div class="a" style="left:611px;top:479px;width:2px;height:1px;background:#000"></div><div class="a" style="left:619px;top:488px;width:2px;height:12px;background:#fff"></div><div class="a" style="left:604px;top:483px;width:17px;height:14px;overflow:hidden"><div class="t" style="left:6px;top:0;line-height:14px;font-size:13px;transform:rotate(-90deg);transform-origin:7px 7px">3</div></div><div class="a" style="left:611px;top:509px;width:2px;height:1px;background:#000"></div><div class="a" style="left:611px;top:524px;width:2px;height:1px;background:#000"></div><div class="a" style="left:611px;top:539px;width:2px;height:1px;background:#000"></div><div class="a" style="left:610px;top:554px;width:5px;height:1px;background:#000"></div><div class="a" style="left:611px;top:569px;width:2px;height:1px;background:#000"></div><div class="a" style="left:611px;top:584px;width:2px;height:1px;background:#000"></div><div class="a" style="left:611px;top:599px;width:2px;height:1px;background:#000"></div><div class="a" style="left:619px;top:608px;width:2px;height:12px;background:#fff"></div><div class="a" style="left:604px;top:603px;width:17px;height:14px;overflow:hidden"><div class="t" style="left:6px;top:0;line-height:14px;font-size:13px;transform:rotate(-90deg);transform-origin:7px 7px">4</div></div><div class="a" style="left:611px;top:629px;width:2px;height:1px;background:#000"></div><div class="a" style="left:611px;top:644px;width:2px;height:1px;background:#000"></div><div class="a" style="left:611px;top:659px;width:2px;height:1px;background:#000"></div><div class="a" style="left:610px;top:674px;width:5px;height:1px;background:#000"></div><div class="a" style="left:611px;top:689px;width:2px;height:1px;background:#000"></div><div class="a" style="left:611px;top:704px;width:2px;height:1px;background:#000"></div><div class="a" style="left:611px;top:719px;width:2px;height:1px;background:#000"></div><div class="a" style="left:619px;top:728px;width:2px;height:12px;background:#fff"></div><div class="a" style="left:604px;top:723px;width:17px;height:14px;overflow:hidden"><div class="t" style="left:6px;top:0;line-height:14px;font-size:13px;transform:rotate(-90deg);transform-origin:7px 7px">5</div></div><div class="a" style="left:611px;top:749px;width:2px;height:1px;background:#000"></div><div class="a" style="left:611px;top:764px;width:2px;height:1px;background:#000"></div><div class="a" style="left:611px;top:779px;width:2px;height:1px;background:#000"></div><div class="a" style="left:610px;top:794px;width:5px;height:1px;background:#000"></div><div class="a" style="left:611px;top:809px;width:2px;height:1px;background:#000"></div><div class="a" style="left:611px;top:824px;width:2px;height:1px;background:#000"></div><div class="a" style="left:611px;top:839px;width:2px;height:1px;background:#000"></div><div class="a" style="left:619px;top:848px;width:2px;height:12px;background:#fff"></div><div class="a" style="left:604px;top:843px;width:17px;height:14px;overflow:hidden"><div class="t" style="left:6px;top:0;line-height:14px;font-size:13px;transform:rotate(-90deg);transform-origin:7px 7px">6</div></div><div class="a" style="left:611px;top:869px;width:2px;height:1px;background:#000"></div><div class="a" style="left:611px;top:884px;width:2px;height:1px;background:#000"></div><div class="a" style="left:611px;top:899px;width:2px;height:1px;background:#000"></div><div class="a" style="left:610px;top:914px;width:5px;height:1px;background:#000"></div><div class="a" style="left:611px;top:929px;width:2px;height:1px;background:#000"></div><div class="a" style="left:611px;top:944px;width:2px;height:1px;background:#000"></div><div class="a" style="left:611px;top:959px;width:2px;height:1px;background:#000"></div><div class="a" style="left:619px;top:968px;width:2px;height:12px;background:#fff"></div><div class="a" style="left:604px;top:963px;width:17px;height:14px;overflow:hidden"><div class="t" style="left:6px;top:0;line-height:14px;font-size:13px;transform:rotate(-90deg);transform-origin:7px 7px">7</div></div><div class="a" style="left:667px;top:387px;width:150px;height:318px;border:1px solid #72a83a;background:#fff"></div><div class="a" style="left:668px;top:416px;width:148px;height:0;border-top:1px dotted #909090"></div><div class="a" style="left:667px;top:396px;width:150px;height:22px;text-align:center;white-space:nowrap;font-size:16px;line-height:22px"><svg width="13" height="13" viewBox="0 0 13 13" style="vertical-align:-1px;margin-right:8px"><rect x="0.5" y="0.5" width="10" height="9" fill="#fff" stroke="#4aa02a"/><rect x="1" y="1" width="9" height="1.5" fill="#6ac03a"/><rect x="1" y="4" width="6" height="2" fill="#9ad868"/><path d="M5.5 3.5h6v9h-6z" fill="url(#gY)" stroke="#e0a030"/><rect x="7" y="7" width="4" height="5" rx="1" fill="#f8c040" stroke="#d07010"/></svg>WaterMark</div><svg class="i" style="left:671px;top:422px" width="15" height="14" viewBox="0 0 15 14"><path d="M0.5 5.5l1.5-1.5l1 -1l1 1l1-1l1 1h2a3.8 3.8 0 1 1 0 2.5h-6.5z" fill="#f8e040" stroke="#b08010"/><circle cx="10.5" cy="4.8" r="1" fill="#7a5010"/><rect x="2.5" y="10.5" width="3" height="2" fill="#5ab05a" stroke="#000"/><rect x="8.5" y="10.5" width="3" height="2" fill="#5ab05a" stroke="#000"/></svg><div class="t" style="left:689px;top:418px;width:127px;overflow:hidden;line-height:22px;font-size:16.3px">id&nbsp; :String</div><svg class="i" style="left:674px;top:446px" width="10" height="11" viewBox="0 0 10 11"><rect x="0.5" y="0.5" width="3" height="2" fill="#5ab05a" stroke="#000"/><rect x="0.5" y="4.5" width="3" height="2" fill="#5ab05a" stroke="#000"/><rect x="0.5" y="8.5" width="3" height="2" fill="#5ab05a" stroke="#000"/><path d="M6 2.5h3M6 6.5h3M6 10.5h3" stroke="#000"/></svg><div class="t" style="left:689px;top:440px;width:127px;overflow:hidden;line-height:22px;font-size:16.3px">content&nbsp; :String</div><svg class="i" style="left:674px;top:468px" width="10" height="11" viewBox="0 0 10 11"><rect x="0.5" y="0.5" width="3" height="2" fill="#5ab05a" stroke="#000"/><rect x="0.5" y="4.5" width="3" height="2" fill="#5ab05a" stroke="#000"/><rect x="0.5" y="8.5" width="3" height="2" fill="#5ab05a" stroke="#000"/><path d="M6 2.5h3M6 6.5h3M6 10.5h3" stroke="#000"/></svg><div class="t" style="left:689px;top:462px;width:127px;overflow:hidden;line-height:22px;font-size:16.3px">isEnable&nbsp; :String</div><svg class="i" style="left:674px;top:490px" width="10" height="11" viewBox="0 0 10 11"><rect x="0.5" y="0.5" width="3" height="2" fill="#5ab05a" stroke="#000"/><rect x="0.5" y="4.5" width="3" height="2" fill="#5ab05a" stroke="#000"/><rect x="0.5" y="8.5" width="3" height="2" fill="#5ab05a" stroke="#000"/><path d="M6 2.5h3M6 6.5h3M6 10.5h3" stroke="#000"/></svg><div class="t" style="left:689px;top:484px;width:127px;overflow:hidden;line-height:22px;font-size:16.3px">opaticy&nbsp; :String</div><svg class="i" style="left:674px;top:512px" width="10" height="11" viewBox="0 0 10 11"><rect x="0.5" y="0.5" width="3" height="2" fill="#5ab05a" stroke="#000"/><rect x="0.5" y="4.5" width="3" height="2" fill="#5ab05a" stroke="#000"/><rect x="0.5" y="8.5" width="3" height="2" fill="#5ab05a" stroke="#000"/><path d="M6 2.5h3M6 6.5h3M6 10.5h3" stroke="#000"/></svg><div class="t" style="left:689px;top:506px;width:127px;overflow:hidden;line-height:22px;font-size:16.3px">rotationAngle&nbsp; ...</div><svg class="i" style="left:674px;top:534px" width="10" height="11" viewBox="0 0 10 11"><rect x="0.5" y="0.5" width="3" height="2" fill="#5ab05a" stroke="#000"/><rect x="0.5" y="4.5" width="3" height="2" fill="#5ab05a" stroke="#000"/><rect x="0.5" y="8.5" width="3" height="2" fill="#5ab05a" stroke="#000"/><path d="M6 2.5h3M6 6.5h3M6 10.5h3" stroke="#000"/></svg><div class="t" style="left:689px;top:528px;width:127px;overflow:hidden;line-height:22px;font-size:16.3px">extra&nbsp; :String</div><svg class="i" style="left:674px;top:556px" width="10" height="11" viewBox="0 0 10 11"><rect x="0.5" y="0.5" width="3" height="2" fill="#5ab05a" stroke="#000"/><rect x="0.5" y="4.5" width="3" height="2" fill="#5ab05a" stroke="#000"/><rect x="0.5" y="8.5" width="3" height="2" fill="#5ab05a" stroke="#000"/><path d="M6 2.5h3M6 6.5h3M6 10.5h3" stroke="#000"/></svg><div class="t" style="left:689px;top:550px;width:127px;overflow:hidden;line-height:22px;font-size:16.3px">createUser&nbsp; :Str...</div><svg class="i" style="left:674px;top:578px" width="10" height="11" viewBox="0 0 10 11"><rect x="0.5" y="0.5" width="3" height="2" fill="#5ab05a" stroke="#000"/><rect x="0.5" y="4.5" width="3" height="2" fill="#5ab05a" stroke="#000"/><rect x="0.5" y="8.5" width="3" height="2" fill="#5ab05a" stroke="#000"/><path d="M6 2.5h3M6 6.5h3M6 10.5h3" stroke="#000"/></svg><div class="t" style="left:689px;top:572px;width:127px;overflow:hidden;line-height:22px;font-size:16.3px">updateUser&nbsp; :St...</div><svg class="i" style="left:674px;top:600px" width="10" height="11" viewBox="0 0 10 11"><rect x="0.5" y="0.5" width="3" height="2" fill="#5ab05a" stroke="#000"/><rect x="0.5" y="4.5" width="3" height="2" fill="#5ab05a" stroke="#000"/><rect x="0.5" y="8.5" width="3" height="2" fill="#5ab05a" stroke="#000"/><path d="M6 2.5h3M6 6.5h3M6 10.5h3" stroke="#000"/></svg><div class="t" style="left:689px;top:594px;width:127px;overflow:hidden;line-height:22px;font-size:16.3px">createTime&nbsp; :Ti...</div><svg class="i" style="left:674px;top:622px" width="10" height="11" viewBox="0 0 10 11"><rect x="0.5" y="0.5" width="3" height="2" fill="#5ab05a" stroke="#000"/><rect x="0.5" y="4.5" width="3" height="2" fill="#5ab05a" stroke="#000"/><rect x="0.5" y="8.5" width="3" height="2" fill="#5ab05a" stroke="#000"/><path d="M6 2.5h3M6 6.5h3M6 10.5h3" stroke="#000"/></svg><div class="t" style="left:689px;top:616px;width:127px;overflow:hidden;line-height:22px;font-size:16.3px">updateTime&nbsp; :T...</div><svg class="i" style="left:674px;top:644px" width="10" height="11" viewBox="0 0 10 11"><rect x="0.5" y="0.5" width="3" height="2" fill="#5ab05a" stroke="#000"/><rect x="0.5" y="4.5" width="3" height="2" fill="#5ab05a" stroke="#000"/><rect x="0.5" y="8.5" width="3" height="2" fill="#5ab05a" stroke="#000"/><path d="M6 2.5h3M6 6.5h3M6 10.5h3" stroke="#000"/></svg><div class="t" style="left:689px;top:638px;width:127px;overflow:hidden;line-height:22px;font-size:16.3px">tenantId&nbsp; :String</div><svg class="i" style="left:674px;top:666px" width="10" height="11" viewBox="0 0 10 11"><rect x="0.5" y="0.5" width="3" height="2" fill="#5ab05a" stroke="#000"/><rect x="0.5" y="4.5" width="3" height="2" fill="#5ab05a" stroke="#000"/><rect x="0.5" y="8.5" width="3" height="2" fill="#5ab05a" stroke="#000"/><path d="M6 2.5h3M6 6.5h3M6 10.5h3" stroke="#000"/></svg><div class="t" style="left:689px;top:660px;width:127px;overflow:hidden;line-height:22px;font-size:16.3px">waterMarkHei...</div><svg class="i" style="left:674px;top:688px" width="10" height="11" viewBox="0 0 10 11"><rect x="0.5" y="0.5" width="3" height="2" fill="#5ab05a" stroke="#000"/><rect x="0.5" y="4.5" width="3" height="2" fill="#5ab05a" stroke="#000"/><rect x="0.5" y="8.5" width="3" height="2" fill="#5ab05a" stroke="#000"/><path d="M6 2.5h3M6 6.5h3M6 10.5h3" stroke="#000"/></svg><div class="t" style="left:689px;top:682px;width:127px;overflow:hidden;line-height:22px;font-size:16.3px">waterMarkWid...</div><div class="a" style="left:862px;top:387px;width:150px;height:528px;border:1px solid #72a83a;background:#fff"></div><div class="a" style="left:863px;top:416px;width:148px;height:0;border-top:1px dotted #909090"></div><div class="a" style="left:863px;top:902px;width:148px;height:0;border-top:1px dotted #909090"></div><div class="a" style="left:862px;top:396px;width:150px;height:22px;text-align:center;white-space:nowrap;font-size:16px;line-height:22px"><svg width="13" height="13" viewBox="0 0 13 13" style="vertical-align:-1px;margin-right:8px"><rect x="0.5" y="0.5" width="10" height="9" fill="#fff" stroke="#4aa02a"/><rect x="1" y="1" width="9" height="1.5" fill="#6ac03a"/><rect x="1" y="4" width="6" height="2" fill="#9ad868"/><path d="M5.5 3.5h6v9h-6z" fill="url(#gY)" stroke="#e0a030"/><rect x="7" y="7" width="4" height="5" rx="1" fill="#f8c040" stroke="#d07010"/></svg>SafetySite</div><svg class="i" style="left:866px;top:422px" width="15" height="14" viewBox="0 0 15 14"><path d="M0.5 5.5l1.5-1.5l1 -1l1 1l1-1l1 1h2a3.8 3.8 0 1 1 0 2.5h-6.5z" fill="#f8e040" stroke="#b08010"/><circle cx="10.5" cy="4.8" r="1" fill="#7a5010"/><rect x="2.5" y="10.5" width="3" height="2" fill="#5ab05a" stroke="#000"/><rect x="8.5" y="10.5" width="3" height="2" fill="#5ab05a" stroke="#000"/></svg><div class="t" style="left:884px;top:418px;width:127px;overflow:hidden;line-height:22px;font-size:16.3px">id&nbsp; :String</div><svg class="i" style="left:869px;top:446px" width="10" height="11" viewBox="0 0 10 11"><rect x="0.5" y="0.5" width="3" height="2" fill="#5ab05a" stroke="#000"/><rect x="0.5" y="4.5" width="3" height="2" fill="#5ab05a" stroke="#000"/><rect x="0.5" y="8.5" width="3" height="2" fill="#5ab05a" stroke="#000"/><path d="M6 2.5h3M6 6.5h3M6 10.5h3" stroke="#000"/></svg><div class="t" style="left:884px;top:440px;width:127px;overflow:hidden;line-height:22px;font-size:16.3px">passwordLengt...</div><svg class="i" style="left:869px;top:468px" width="10" height="11" viewBox="0 0 10 11"><rect x="0.5" y="0.5" width="3" height="2" fill="#5ab05a" stroke="#000"/><rect x="0.5" y="4.5" width="3" height="2" fill="#5ab05a" stroke="#000"/><rect x="0.5" y="8.5" width="3" height="2" fill="#5ab05a" stroke="#000"/><path d="M6 2.5h3M6 6.5h3M6 10.5h3" stroke="#000"/></svg><div class="t" style="left:884px;top:462px;width:127px;overflow:hidden;line-height:22px;font-size:16.3px">passwordType...</div><svg class="i" style="left:869px;top:490px" width="10" height="11" viewBox="0 0 10 11"><rect x="0.5" y="0.5" width="3" height="2" fill="#5ab05a" stroke="#000"/><rect x="0.5" y="4.5" width="3" height="2" fill="#5ab05a" stroke="#000"/><rect x="0.5" y="8.5" width="3" height="2" fill="#5ab05a" stroke="#000"/><path d="M6 2.5h3M6 6.5h3M6 10.5h3" stroke="#000"/></svg><div class="t" style="left:884px;top:484px;width:127px;overflow:hidden;line-height:22px;font-size:16.3px">isWatermark&nbsp; :S...</div><svg class="i" style="left:869px;top:512px" width="10" height="11" viewBox="0 0 10 11"><rect x="0.5" y="0.5" width="3" height="2" fill="#5ab05a" stroke="#000"/><rect x="0.5" y="4.5" width="3" height="2" fill="#5ab05a" stroke="#000"/><rect x="0.5" y="8.5" width="3" height="2" fill="#5ab05a" stroke="#000"/><path d="M6 2.5h3M6 6.5h3M6 10.5h3" stroke="#000"/></svg><div class="t" style="left:884px;top:506px;width:127px;overflow:hidden;line-height:22px;font-size:16.3px">watermarkTyp...</div><svg class="i" style="left:869px;top:534px" width="10" height="11" viewBox="0 0 10 11"><rect x="0.5" y="0.5" width="3" height="2" fill="#5ab05a" stroke="#000"/><rect x="0.5" y="4.5" width="3" height="2" fill="#5ab05a" stroke="#000"/><rect x="0.5" y="8.5" width="3" height="2" fill="#5ab05a" stroke="#000"/><path d="M6 2.5h3M6 6.5h3M6 10.5h3" stroke="#000"/></svg><div class="t" style="left:884px;top:528px;width:127px;overflow:hidden;line-height:22px;font-size:16.3px">reminderChan...</div><svg class="i" style="left:869px;top:556px" width="10" height="11" viewBox="0 0 10 11"><rect x="0.5" y="0.5" width="3" height="2" fill="#5ab05a" stroke="#000"/><rect x="0.5" y="4.5" width="3" height="2" fill="#5ab05a" stroke="#000"/><rect x="0.5" y="8.5" width="3" height="2" fill="#5ab05a" stroke="#000"/><path d="M6 2.5h3M6 6.5h3M6 10.5h3" stroke="#000"/></svg><div class="t" style="left:884px;top:550px;width:127px;overflow:hidden;line-height:22px;font-size:16.3px">isUpdate&nbsp; :String</div><svg class="i" style="left:869px;top:578px" width="10" height="11" viewBox="0 0 10 11"><rect x="0.5" y="0.5" width="3" height="2" fill="#5ab05a" stroke="#000"/><rect x="0.5" y="4.5" width="3" height="2" fill="#5ab05a" stroke="#000"/><rect x="0.5" y="8.5" width="3" height="2" fill="#5ab05a" stroke="#000"/><path d="M6 2.5h3M6 6.5h3M6 10.5h3" stroke="#000"/></svg><div class="t" style="left:884px;top:572px;width:127px;overflow:hidden;line-height:22px;font-size:16.3px">firstUpdate&nbsp; :St...</div><svg class="i" style="left:869px;top:600px" width="10" height="11" viewBox="0 0 10 11"><rect x="0.5" y="0.5" width="3" height="2" fill="#5ab05a" stroke="#000"/><rect x="0.5" y="4.5" width="3" height="2" fill="#5ab05a" stroke="#000"/><rect x="0.5" y="8.5" width="3" height="2" fill="#5ab05a" stroke="#000"/><path d="M6 2.5h3M6 6.5h3M6 10.5h3" stroke="#000"/></svg><div class="t" style="left:884px;top:594px;width:127px;overflow:hidden;line-height:22px;font-size:16.3px">allowFail&nbsp; :Deci...</div><svg class="i" style="left:869px;top:622px" width="10" height="11" viewBox="0 0 10 11"><rect x="0.5" y="0.5" width="3" height="2" fill="#5ab05a" stroke="#000"/><rect x="0.5" y="4.5" width="3" height="2" fill="#5ab05a" stroke="#000"/><rect x="0.5" y="8.5" width="3" height="2" fill="#5ab05a" stroke="#000"/><path d="M6 2.5h3M6 6.5h3M6 10.5h3" stroke="#000"/></svg><div class="t" style="left:884px;top:616px;width:127px;overflow:hidden;line-height:22px;font-size:16.3px">lockTime&nbsp; :Deci...</div><svg class="i" style="left:869px;top:644px" width="10" height="11" viewBox="0 0 10 11"><rect x="0.5" y="0.5" width="3" height="2" fill="#5ab05a" stroke="#000"/><rect x="0.5" y="4.5" width="3" height="2" fill="#5ab05a" stroke="#000"/><rect x="0.5" y="8.5" width="3" height="2" fill="#5ab05a" stroke="#000"/><path d="M6 2.5h3M6 6.5h3M6 10.5h3" stroke="#000"/></svg><div class="t" style="left:884px;top:638px;width:127px;overflow:hidden;line-height:22px;font-size:16.3px">freeTime&nbsp; :Deci...</div><svg class="i" style="left:869px;top:666px" width="10" height="11" viewBox="0 0 10 11"><rect x="0.5" y="0.5" width="3" height="2" fill="#5ab05a" stroke="#000"/><rect x="0.5" y="4.5" width="3" height="2" fill="#5ab05a" stroke="#000"/><rect x="0.5" y="8.5" width="3" height="2" fill="#5ab05a" stroke="#000"/><path d="M6 2.5h3M6 6.5h3M6 10.5h3" stroke="#000"/></svg><div class="t" style="left:884px;top:660px;width:127px;overflow:hidden;line-height:22px;font-size:16.3px">description&nbsp; :St...</div><svg class="i" style="left:869px;top:688px" width="10" height="11" viewBox="0 0 10 11"><rect x="0.5" y="0.5" width="3" height="2" fill="#5ab05a" stroke="#000"/><rect x="0.5" y="4.5" width="3" height="2" fill="#5ab05a" stroke="#000"/><rect x="0.5" y="8.5" width="3" height="2" fill="#5ab05a" stroke="#000"/><path d="M6 2.5h3M6 6.5h3M6 10.5h3" stroke="#000"/></svg><div class="t" style="left:884px;top:682px;width:127px;overflow:hidden;line-height:22px;font-size:16.3px">extra&nbsp; :String</div><svg class="i" style="left:869px;top:710px" width="10" height="11" viewBox="0 0 10 11"><rect x="0.5" y="0.5" width="3" height="2" fill="#5ab05a" stroke="#000"/><rect x="0.5" y="4.5" width="3" height="2" fill="#5ab05a" stroke="#000"/><rect x="0.5" y="8.5" width="3" height="2" fill="#5ab05a" stroke="#000"/><path d="M6 2.5h3M6 6.5h3M6 10.5h3" stroke="#000"/></svg><div class="t" style="left:884px;top:704px;width:127px;overflow:hidden;line-height:22px;font-size:16.3px">createUser&nbsp; :Str...</div><svg class="i" style="left:869px;top:732px" width="10" height="11" viewBox="0 0 10 11"><rect x="0.5" y="0.5" width="3" height="2" fill="#5ab05a" stroke="#000"/><rect x="0.5" y="4.5" width="3" height="2" fill="#5ab05a" stroke="#000"/><rect x="0.5" y="8.5" width="3" height="2" fill="#5ab05a" stroke="#000"/><path d="M6 2.5h3M6 6.5h3M6 10.5h3" stroke="#000"/></svg><div class="t" style="left:884px;top:726px;width:127px;overflow:hidden;line-height:22px;font-size:16.3px">updateUser&nbsp; :St...</div><svg class="i" style="left:869px;top:754px" width="10" height="11" viewBox="0 0 10 11"><rect x="0.5" y="0.5" width="3" height="2" fill="#5ab05a" stroke="#000"/><rect x="0.5" y="4.5" width="3" height="2" fill="#5ab05a" stroke="#000"/><rect x="0.5" y="8.5" width="3" height="2" fill="#5ab05a" stroke="#000"/><path d="M6 2.5h3M6 6.5h3M6 10.5h3" stroke="#000"/></svg><div class="t" style="left:884px;top:748px;width:127px;overflow:hidden;line-height:22px;font-size:16.3px">createTime&nbsp; :Ti...</div><svg class="i" style="left:869px;top:776px" width="10" height="11" viewBox="0 0 10 11"><rect x="0.5" y="0.5" width="3" height="2" fill="#5ab05a" stroke="#000"/><rect x="0.5" y="4.5" width="3" height="2" fill="#5ab05a" stroke="#000"/><rect x="0.5" y="8.5" width="3" height="2" fill="#5ab05a" stroke="#000"/><path d="M6 2.5h3M6 6.5h3M6 10.5h3" stroke="#000"/></svg><div class="t" style="left:884px;top:770px;width:127px;overflow:hidden;line-height:22px;font-size:16.3px">updateTime&nbsp; :T...</div><svg class="i" style="left:869px;top:798px" width="10" height="11" viewBox="0 0 10 11"><rect x="0.5" y="0.5" width="3" height="2" fill="#5ab05a" stroke="#000"/><rect x="0.5" y="4.5" width="3" height="2" fill="#5ab05a" stroke="#000"/><rect x="0.5" y="8.5" width="3" height="2" fill="#5ab05a" stroke="#000"/><path d="M6 2.5h3M6 6.5h3M6 10.5h3" stroke="#000"/></svg><div class="t" style="left:884px;top:792px;width:127px;overflow:hidden;line-height:22px;font-size:16.3px">tenantId&nbsp; :String</div><svg class="i" style="left:869px;top:820px" width="10" height="11" viewBox="0 0 10 11"><rect x="0.5" y="0.5" width="3" height="2" fill="#5ab05a" stroke="#000"/><rect x="0.5" y="4.5" width="3" height="2" fill="#5ab05a" stroke="#000"/><rect x="0.5" y="8.5" width="3" height="2" fill="#5ab05a" stroke="#000"/><path d="M6 2.5h3M6 6.5h3M6 10.5h3" stroke="#000"/></svg><div class="t" style="left:884px;top:814px;width:127px;overflow:hidden;line-height:22px;font-size:16.3px">isScanning&nbsp; :Str...</div><svg class="i" style="left:869px;top:842px" width="10" height="11" viewBox="0 0 10 11"><rect x="0.5" y="0.5" width="3" height="2" fill="#5ab05a" stroke="#000"/><rect x="0.5" y="4.5" width="3" height="2" fill="#5ab05a" stroke="#000"/><rect x="0.5" y="8.5" width="3" height="2" fill="#5ab05a" stroke="#000"/><path d="M6 2.5h3M6 6.5h3M6 10.5h3" stroke="#000"/></svg><div class="t" style="left:884px;top:836px;width:127px;overflow:hidden;line-height:22px;font-size:16.3px">scanningTypes ...</div><svg class="i" style="left:869px;top:864px" width="10" height="11" viewBox="0 0 10 11"><rect x="0.5" y="0.5" width="3" height="2" fill="#5ab05a" stroke="#000"/><rect x="0.5" y="4.5" width="3" height="2" fill="#5ab05a" stroke="#000"/><rect x="0.5" y="8.5" width="3" height="2" fill="#5ab05a" stroke="#000"/><path d="M6 2.5h3M6 6.5h3M6 10.5h3" stroke="#000"/></svg><div class="t" style="left:884px;top:858px;width:127px;overflow:hidden;line-height:22px;font-size:16.3px">allowMulLogin ...</div><svg class="i" style="left:869px;top:886px" width="10" height="11" viewBox="0 0 10 11"><rect x="0.5" y="0.5" width="3" height="2" fill="#5ab05a" stroke="#000"/><rect x="0.5" y="4.5" width="3" height="2" fill="#5ab05a" stroke="#000"/><rect x="0.5" y="8.5" width="3" height="2" fill="#5ab05a" stroke="#000"/><path d="M6 2.5h3M6 6.5h3M6 10.5h3" stroke="#000"/></svg><div class="t" style="left:884px;top:880px;width:127px;overflow:hidden;line-height:22px;font-size:16.3px">onlyDifTermina...</div><div class="a" style="left:1057px;top:387px;width:150px;height:213px;border:1px solid #72a83a;background:#fff"></div><div class="a" style="left:1058px;top:416px;width:148px;height:0;border-top:1px dotted #909090"></div><div class="a" style="left:1058px;top:594px;width:148px;height:0;border-top:1px dotted #909090"></div><div class="a" style="left:1057px;top:396px;width:150px;height:22px;text-align:center;white-space:nowrap;font-size:16px;line-height:22px"><svg width="13" height="13" viewBox="0 0 13 13" style="vertical-align:-1px;margin-right:8px"><rect x="0.5" y="0.5" width="10" height="9" fill="#fff" stroke="#4aa02a"/><rect x="1" y="1" width="9" height="1.5" fill="#6ac03a"/><rect x="1" y="4" width="6" height="2" fill="#9ad868"/><path d="M5.5 3.5h6v9h-6z" fill="url(#gY)" stroke="#e0a030"/><rect x="7" y="7" width="4" height="5" rx="1" fill="#f8c040" stroke="#d07010"/></svg>SafetyWhitelist</div><svg class="i" style="left:1061px;top:422px" width="15" height="14" viewBox="0 0 15 14"><path d="M0.5 5.5l1.5-1.5l1 -1l1 1l1-1l1 1h2a3.8 3.8 0 1 1 0 2.5h-6.5z" fill="#f8e040" stroke="#b08010"/><circle cx="10.5" cy="4.8" r="1" fill="#7a5010"/><rect x="2.5" y="10.5" width="3" height="2" fill="#5ab05a" stroke="#000"/><rect x="8.5" y="10.5" width="3" height="2" fill="#5ab05a" stroke="#000"/></svg><div class="t" style="left:1079px;top:418px;width:127px;overflow:hidden;line-height:22px;font-size:16.3px">id&nbsp; :String</div><svg class="i" style="left:1064px;top:446px" width="10" height="11" viewBox="0 0 10 11"><rect x="0.5" y="0.5" width="3" height="2" fill="#5ab05a" stroke="#000"/><rect x="0.5" y="4.5" width="3" height="2" fill="#5ab05a" stroke="#000"/><rect x="0.5" y="8.5" width="3" height="2" fill="#5ab05a" stroke="#000"/><path d="M6 2.5h3M6 6.5h3M6 10.5h3" stroke="#000"/></svg><div class="t" style="left:1079px;top:440px;width:127px;overflow:hidden;line-height:22px;font-size:16.3px">employeeId&nbsp; :S...</div><svg class="i" style="left:1064px;top:468px" width="10" height="11" viewBox="0 0 10 11"><rect x="0.5" y="0.5" width="3" height="2" fill="#5ab05a" stroke="#000"/><rect x="0.5" y="4.5" width="3" height="2" fill="#5ab05a" stroke="#000"/><rect x="0.5" y="8.5" width="3" height="2" fill="#5ab05a" stroke="#000"/><path d="M6 2.5h3M6 6.5h3M6 10.5h3" stroke="#000"/></svg><div class="t" style="left:1079px;top:462px;width:127px;overflow:hidden;line-height:22px;font-size:16.3px">createUser&nbsp; :Str...</div><svg class="i" style="left:1064px;top:490px" width="10" height="11" viewBox="0 0 10 11"><rect x="0.5" y="0.5" width="3" height="2" fill="#5ab05a" stroke="#000"/><rect x="0.5" y="4.5" width="3" height="2" fill="#5ab05a" stroke="#000"/><rect x="0.5" y="8.5" width="3" height="2" fill="#5ab05a" stroke="#000"/><path d="M6 2.5h3M6 6.5h3M6 10.5h3" stroke="#000"/></svg><div class="t" style="left:1079px;top:484px;width:127px;overflow:hidden;line-height:22px;font-size:16.3px">updateUser&nbsp; :St...</div><svg class="i" style="left:1064px;top:512px" width="10" height="11" viewBox="0 0 10 11"><rect x="0.5" y="0.5" width="3" height="2" fill="#5ab05a" stroke="#000"/><rect x="0.5" y="4.5" width="3" height="2" fill="#5ab05a" stroke="#000"/><rect x="0.5" y="8.5" width="3" height="2" fill="#5ab05a" stroke="#000"/><path d="M6 2.5h3M6 6.5h3M6 10.5h3" stroke="#000"/></svg><div class="t" style="left:1079px;top:506px;width:127px;overflow:hidden;line-height:22px;font-size:16.3px">createTime&nbsp; :Ti...</div><svg class="i" style="left:1064px;top:534px" width="10" height="11" viewBox="0 0 10 11"><rect x="0.5" y="0.5" width="3" height="2" fill="#5ab05a" stroke="#000"/><rect x="0.5" y="4.5" width="3" height="2" fill="#5ab05a" stroke="#000"/><rect x="0.5" y="8.5" width="3" height="2" fill="#5ab05a" stroke="#000"/><path d="M6 2.5h3M6 6.5h3M6 10.5h3" stroke="#000"/></svg><div class="t" style="left:1079px;top:528px;width:127px;overflow:hidden;line-height:22px;font-size:16.3px">updateTime&nbsp; :T...</div><svg class="i" style="left:1064px;top:556px" width="10" height="11" viewBox="0 0 10 11"><rect x="0.5" y="0.5" width="3" height="2" fill="#5ab05a" stroke="#000"/><rect x="0.5" y="4.5" width="3" height="2" fill="#5ab05a" stroke="#000"/><rect x="0.5" y="8.5" width="3" height="2" fill="#5ab05a" stroke="#000"/><path d="M6 2.5h3M6 6.5h3M6 10.5h3" stroke="#000"/></svg><div class="t" style="left:1079px;top:550px;width:127px;overflow:hidden;line-height:22px;font-size:16.3px">tenantId&nbsp; :String</div><svg class="i" style="left:1064px;top:578px" width="10" height="11" viewBox="0 0 10 11"><rect x="0.5" y="0.5" width="3" height="2" fill="#5ab05a" stroke="#000"/><rect x="0.5" y="4.5" width="3" height="2" fill="#5ab05a" stroke="#000"/><rect x="0.5" y="8.5" width="3" height="2" fill="#5ab05a" stroke="#000"/><path d="M6 2.5h3M6 6.5h3M6 10.5h3" stroke="#000"/></svg><div class="t" style="left:1079px;top:572px;width:127px;overflow:hidden;line-height:22px;font-size:16.3px">types&nbsp; :String</div><div class="a" style="left:1267px;top:389px;width:150px;height:406px;border:1px solid #72a83a;background:#fff"></div><div class="a" style="left:1268px;top:418px;width:148px;height:0;border-top:1px dotted #909090"></div><div class="a" style="left:1267px;top:398px;width:150px;height:22px;text-align:center;white-space:nowrap;font-size:16px;line-height:22px"><svg width="13" height="13" viewBox="0 0 13 13" style="vertical-align:-1px;margin-right:8px"><rect x="0.5" y="0.5" width="10" height="9" fill="#fff" stroke="#4aa02a"/><rect x="1" y="1" width="9" height="1.5" fill="#6ac03a"/><rect x="1" y="4" width="6" height="2" fill="#9ad868"/><path d="M5.5 3.5h6v9h-6z" fill="url(#gY)" stroke="#e0a030"/><rect x="7" y="7" width="4" height="5" rx="1" fill="#f8c040" stroke="#d07010"/></svg>SafetySiteTem...</div><svg class="i" style="left:1271px;top:424px" width="15" height="14" viewBox="0 0 15 14"><path d="M0.5 5.5l1.5-1.5l1 -1l1 1l1-1l1 1h2a3.8 3.8 0 1 1 0 2.5h-6.5z" fill="#f8e040" stroke="#b08010"/><circle cx="10.5" cy="4.8" r="1" fill="#7a5010"/><rect x="2.5" y="10.5" width="3" height="2" fill="#5ab05a" stroke="#000"/><rect x="8.5" y="10.5" width="3" height="2" fill="#5ab05a" stroke="#000"/></svg><div class="t" style="left:1289px;top:420px;width:127px;overflow:hidden;line-height:22px;font-size:16.3px">id&nbsp; :String</div><svg class="i" style="left:1274px;top:448px" width="10" height="11" viewBox="0 0 10 11"><rect x="0.5" y="0.5" width="3" height="2" fill="#5ab05a" stroke="#000"/><rect x="0.5" y="4.5" width="3" height="2" fill="#5ab05a" stroke="#000"/><rect x="0.5" y="8.5" width="3" height="2" fill="#5ab05a" stroke="#000"/><path d="M6 2.5h3M6 6.5h3M6 10.5h3" stroke="#000"/></svg><div class="t" style="left:1289px;top:442px;width:127px;overflow:hidden;line-height:22px;font-size:16.3px">passwordLengt...</div><svg class="i" style="left:1274px;top:470px" width="10" height="11" viewBox="0 0 10 11"><rect x="0.5" y="0.5" width="3" height="2" fill="#5ab05a" stroke="#000"/><rect x="0.5" y="4.5" width="3" height="2" fill="#5ab05a" stroke="#000"/><rect x="0.5" y="8.5" width="3" height="2" fill="#5ab05a" stroke="#000"/><path d="M6 2.5h3M6 6.5h3M6 10.5h3" stroke="#000"/></svg><div class="t" style="left:1289px;top:464px;width:127px;overflow:hidden;line-height:22px;font-size:16.3px">passwordType...</div><svg class="i" style="left:1274px;top:492px" width="10" height="11" viewBox="0 0 10 11"><rect x="0.5" y="0.5" width="3" height="2" fill="#5ab05a" stroke="#000"/><rect x="0.5" y="4.5" width="3" height="2" fill="#5ab05a" stroke="#000"/><rect x="0.5" y="8.5" width="3" height="2" fill="#5ab05a" stroke="#000"/><path d="M6 2.5h3M6 6.5h3M6 10.5h3" stroke="#000"/></svg><div class="t" style="left:1289px;top:486px;width:127px;overflow:hidden;line-height:22px;font-size:16.3px">isWatermark&nbsp; :S...</div><svg class="i" style="left:1274px;top:514px" width="10" height="11" viewBox="0 0 10 11"><rect x="0.5" y="0.5" width="3" height="2" fill="#5ab05a" stroke="#000"/><rect x="0.5" y="4.5" width="3" height="2" fill="#5ab05a" stroke="#000"/><rect x="0.5" y="8.5" width="3" height="2" fill="#5ab05a" stroke="#000"/><path d="M6 2.5h3M6 6.5h3M6 10.5h3" stroke="#000"/></svg><div class="t" style="left:1289px;top:508px;width:127px;overflow:hidden;line-height:22px;font-size:16.3px">watermarkTyp...</div><svg class="i" style="left:1274px;top:536px" width="10" height="11" viewBox="0 0 10 11"><rect x="0.5" y="0.5" width="3" height="2" fill="#5ab05a" stroke="#000"/><rect x="0.5" y="4.5" width="3" height="2" fill="#5ab05a" stroke="#000"/><rect x="0.5" y="8.5" width="3" height="2" fill="#5ab05a" stroke="#000"/><path d="M6 2.5h3M6 6.5h3M6 10.5h3" stroke="#000"/></svg><div class="t" style="left:1289px;top:530px;width:127px;overflow:hidden;line-height:22px;font-size:16.3px">reminderChan...</div><svg class="i" style="left:1274px;top:558px" width="10" height="11" viewBox="0 0 10 11"><rect x="0.5" y="0.5" width="3" height="2" fill="#5ab05a" stroke="#000"/><rect x="0.5" y="4.5" width="3" height="2" fill="#5ab05a" stroke="#000"/><rect x="0.5" y="8.5" width="3" height="2" fill="#5ab05a" stroke="#000"/><path d="M6 2.5h3M6 6.5h3M6 10.5h3" stroke="#000"/></svg><div class="t" style="left:1289px;top:552px;width:127px;overflow:hidden;line-height:22px;font-size:16.3px">isUpdate&nbsp; :String</div><svg class="i" style="left:1274px;top:580px" width="10" height="11" viewBox="0 0 10 11"><rect x="0.5" y="0.5" width="3" height="2" fill="#5ab05a" stroke="#000"/><rect x="0.5" y="4.5" width="3" height="2" fill="#5ab05a" stroke="#000"/><rect x="0.5" y="8.5" width="3" height="2" fill="#5ab05a" stroke="#000"/><path d="M6 2.5h3M6 6.5h3M6 10.5h3" stroke="#000"/></svg><div class="t" style="left:1289px;top:574px;width:127px;overflow:hidden;line-height:22px;font-size:16.3px">firstUpdate&nbsp; :St...</div><svg class="i" style="left:1274px;top:602px" width="10" height="11" viewBox="0 0 10 11"><rect x="0.5" y="0.5" width="3" height="2" fill="#5ab05a" stroke="#000"/><rect x="0.5" y="4.5" width="3" height="2" fill="#5ab05a" stroke="#000"/><rect x="0.5" y="8.5" width="3" height="2" fill="#5ab05a" stroke="#000"/><path d="M6 2.5h3M6 6.5h3M6 10.5h3" stroke="#000"/></svg><div class="t" style="left:1289px;top:596px;width:127px;overflow:hidden;line-height:22px;font-size:16.3px">allowFail&nbsp; :Deci...</div><svg class="i" style="left:1274px;top:624px" width="10" height="11" viewBox="0 0 10 11"><rect x="0.5" y="0.5" width="3" height="2" fill="#5ab05a" stroke="#000"/><rect x="0.5" y="4.5" width="3" height="2" fill="#5ab05a" stroke="#000"/><rect x="0.5" y="8.5" width="3" height="2" fill="#5ab05a" stroke="#000"/><path d="M6 2.5h3M6 6.5h3M6 10.5h3" stroke="#000"/></svg><div class="t" style="left:1289px;top:618px;width:127px;overflow:hidden;line-height:22px;font-size:16.3px">lockTime&nbsp; :Deci...</div><svg class="i" style="left:1274px;top:646px" width="10" height="11" viewBox="0 0 10 11"><rect x="0.5" y="0.5" width="3" height="2" fill="#5ab05a" stroke="#000"/><rect x="0.5" y="4.5" width="3" height="2" fill="#5ab05a" stroke="#000"/><rect x="0.5" y="8.5" width="3" height="2" fill="#5ab05a" stroke="#000"/><path d="M6 2.5h3M6 6.5h3M6 10.5h3" stroke="#000"/></svg><div class="t" style="left:1289px;top:640px;width:127px;overflow:hidden;line-height:22px;font-size:16.3px">freeTime&nbsp; :Deci...</div><svg class="i" style="left:1274px;top:668px" width="10" height="11" viewBox="0 0 10 11"><rect x="0.5" y="0.5" width="3" height="2" fill="#5ab05a" stroke="#000"/><rect x="0.5" y="4.5" width="3" height="2" fill="#5ab05a" stroke="#000"/><rect x="0.5" y="8.5" width="3" height="2" fill="#5ab05a" stroke="#000"/><path d="M6 2.5h3M6 6.5h3M6 10.5h3" stroke="#000"/></svg><div class="t" style="left:1289px;top:662px;width:127px;overflow:hidden;line-height:22px;font-size:16.3px">description&nbsp; :St...</div><svg class="i" style="left:1274px;top:690px" width="10" height="11" viewBox="0 0 10 11"><rect x="0.5" y="0.5" width="3" height="2" fill="#5ab05a" stroke="#000"/><rect x="0.5" y="4.5" width="3" height="2" fill="#5ab05a" stroke="#000"/><rect x="0.5" y="8.5" width="3" height="2" fill="#5ab05a" stroke="#000"/><path d="M6 2.5h3M6 6.5h3M6 10.5h3" stroke="#000"/></svg><div class="t" style="left:1289px;top:684px;width:127px;overflow:hidden;line-height:22px;font-size:16.3px">extra&nbsp; :String</div><svg class="i" style="left:1274px;top:712px" width="10" height="11" viewBox="0 0 10 11"><rect x="0.5" y="0.5" width="3" height="2" fill="#5ab05a" stroke="#000"/><rect x="0.5" y="4.5" width="3" height="2" fill="#5ab05a" stroke="#000"/><rect x="0.5" y="8.5" width="3" height="2" fill="#5ab05a" stroke="#000"/><path d="M6 2.5h3M6 6.5h3M6 10.5h3" stroke="#000"/></svg><div class="t" style="left:1289px;top:706px;width:127px;overflow:hidden;line-height:22px;font-size:16.3px">isScanning&nbsp; :Str...</div><svg class="i" style="left:1274px;top:734px" width="10" height="11" viewBox="0 0 10 11"><rect x="0.5" y="0.5" width="3" height="2" fill="#5ab05a" stroke="#000"/><rect x="0.5" y="4.5" width="3" height="2" fill="#5ab05a" stroke="#000"/><rect x="0.5" y="8.5" width="3" height="2" fill="#5ab05a" stroke="#000"/><path d="M6 2.5h3M6 6.5h3M6 10.5h3" stroke="#000"/></svg><div class="t" style="left:1289px;top:728px;width:127px;overflow:hidden;line-height:22px;font-size:16.3px">scanningTypes ...</div><svg class="i" style="left:1274px;top:756px" width="10" height="11" viewBox="0 0 10 11"><rect x="0.5" y="0.5" width="3" height="2" fill="#5ab05a" stroke="#000"/><rect x="0.5" y="4.5" width="3" height="2" fill="#5ab05a" stroke="#000"/><rect x="0.5" y="8.5" width="3" height="2" fill="#5ab05a" stroke="#000"/><path d="M6 2.5h3M6 6.5h3M6 10.5h3" stroke="#000"/></svg><div class="t" style="left:1289px;top:750px;width:127px;overflow:hidden;line-height:22px;font-size:16.3px">allowMulLogin ...</div><svg class="i" style="left:1274px;top:778px" width="10" height="11" viewBox="0 0 10 11"><rect x="0.5" y="0.5" width="3" height="2" fill="#5ab05a" stroke="#000"/><rect x="0.5" y="4.5" width="3" height="2" fill="#5ab05a" stroke="#000"/><rect x="0.5" y="8.5" width="3" height="2" fill="#5ab05a" stroke="#000"/><path d="M6 2.5h3M6 6.5h3M6 10.5h3" stroke="#000"/></svg><div class="t" style="left:1289px;top:772px;width:127px;overflow:hidden;line-height:22px;font-size:16.3px">onlyDifTermina...</div>
<svg class="i" style="left:1777px;top:97px" width="17" height="18" viewBox="0 0 17 18"><path d="M3.5 3.5v-1.5q0-1 1-1h2q1 0 1.5 1.5h7.5v9.5h-12z" fill="url(#gF)" stroke="#c8862a"/><rect x="2.5" y="6.5" width="5" height="8" fill="#80ccff" stroke="#1a6aa0"/><path d="M0 7.5h2.5M0 9.5h2.5M0 11.5h2.5M0 13.5h2.5M7.5 7.5h2.5M7.5 9.5h2.5M7.5 11.5h2.5M7.5 13.5h2.5" stroke="#1a6aa0"/></svg><div class="a" style="left:1797px;top:94px;width:20px;height:22px;background:#cde4fb;border:1px solid #99c4f0"></div><svg class="i" style="left:1800px;top:98px" width="17" height="17" viewBox="0 0 17 17"><path d="M1.5 1.5h4l1 1.5h7v10h-12z" fill="#fbd890" stroke="#c08a30"/><circle cx="13" cy="12" r="3.5" fill="#8ac0e0" stroke="#3a80b0"/></svg><div class="a" style="left:1612px;top:121px;width:210px;height:26px;border:1px solid #7a7a7a;background:#fff"></div><div class="a" style="left:1612px;top:156px;width:210px;height:840px;border:1px solid #a8a8a8;background:#fff"></div><svg class="i" style="left:1622px;top:164px" width="7" height="11" viewBox="0 0 7 11"><path d="M1.2 1.2l4 4.3l-4 4.3" fill="none" stroke="#a8a8a8" stroke-width="1.8"/></svg><svg class="i" style="left:1637px;top:161px" width="16" height="16" viewBox="0 0 16 16"><path d="M0.5 11.5V1.5q0-1 1-1h3q.8 0 1.2.8l.5.7h7.3q1 0 1 1v8.5z" fill="url(#gF)" stroke="#d0902e"/><rect x="6.5" y="4.5" width="4" height="4" fill="#f2c230" stroke="#5a3a2a"/><path d="M6.5 8.5l-2 3" stroke="#333"/><rect x="3.5" y="11.5" width="4" height="4" fill="#7fb7d8" stroke="#1a2a9a"/><path d="M10.6 11.2q0-1.7 1.8-1.7t1.8 1.5q0 1-1 1.5q-.7.4-.7 1" fill="none" stroke="#2328a0" stroke-width="1.4"/><rect x="11.8" y="14.6" width="1.4" height="1.3" fill="#2328a0"/></svg><div class="row" style="left:1658px;top:158px">com.primeton.eos.foundation</div>
</body></html>
